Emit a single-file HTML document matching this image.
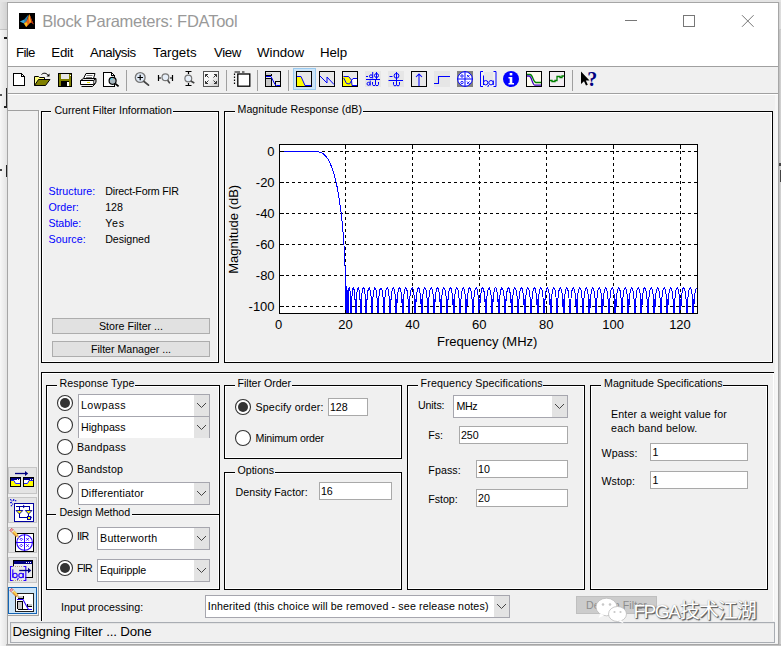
<!DOCTYPE html>
<html><head><meta charset="utf-8"><title>Block Parameters: FDATool</title>
<style>
html,body{margin:0;padding:0;}
body{width:781px;height:646px;position:relative;overflow:hidden;background:#f7f7f7;font-family:'Liberation Sans', sans-serif;}
#root div{position:absolute;box-sizing:content-box;}
#root span{position:absolute;white-space:pre;}
#root{position:absolute;left:0;top:0;width:781px;height:646px;overflow:hidden;}
</style></head><body><div id="root">
<div style="left:0px;top:0px;width:781px;height:29px;background:#e4e4e4;"></div>
<div style="left:0px;top:29px;width:781px;height:617px;background:#f7f7f7;"></div>
<div style="left:0px;top:29px;width:8px;height:1px;background:#c8c8c8;"></div>
<div style="left:779px;top:29px;width:2px;height:1px;background:#c8c8c8;"></div>
<div style="left:0px;top:2px;width:7px;height:644px;background:linear-gradient(90deg,rgba(0,0,0,0) 0%,rgba(0,0,0,0.08) 100%);"></div>
<div style="left:779px;top:2px;width:2px;height:27px;background:linear-gradient(90deg,#d0d0d0,#e2e2e2);"></div>
<div style="left:779px;top:30px;width:2px;height:616px;background:linear-gradient(90deg,#bcbcbc,#d6d6d6);"></div>
<div style="left:779px;top:163px;width:2px;height:3px;background:#444;"></div>
<div style="left:780px;top:170px;width:1px;height:12px;background:#444;"></div>
<div style="left:6px;top:644px;width:775px;height:2px;background:linear-gradient(180deg,#b0b0b0,#c8c8c8);"></div>
<div style="left:4px;top:37px;width:4px;height:2px;background:#1a1a1a;"></div>
<div style="left:7px;top:33px;width:1px;height:3px;background:#777;"></div>
<div style="left:6px;top:88px;width:1.5px;height:18px;background:#222;"></div>
<div style="left:4px;top:106px;width:3px;height:1.5px;background:#222;"></div>
<div style="left:0px;top:94px;width:2px;height:1.5px;background:#555;"></div>
<div style="left:6px;top:164.5px;width:1.5px;height:12px;background:#222;"></div>
<div style="left:0px;top:169px;width:2px;height:1.5px;background:#444;"></div>
<div style="left:7px;top:2px;width:770px;height:641px;border:1px solid #a6a6a6;background:#f0f0f0;"></div>
<div style="left:8px;top:3px;width:770px;height:64px;background:#fff;"></div>
<div style="left:8px;top:66px;width:770px;height:1px;background:#a0a0a0;"></div>
<div style="left:8px;top:93px;width:770px;height:1px;background:#a0a0a0;"></div>
<div style="left:8px;top:94px;width:770px;height:1px;background:#fff;"></div>
<div style="left:775px;top:95px;width:3px;height:548px;background:#f6f6f6;"></div>
<svg style="position:absolute;left:19px;top:13px" width="16" height="16" viewBox="0 0 16 16">
<rect width="16" height="16" fill="#000"/>
<path d="M0.8 8.6 L5.2 6.6 L7.2 8.2 L5 10.6 Z" fill="#3fa9d8"/>
<path d="M5.2 6.6 L9.6 1.6 L7.6 8.6 L5.6 10 Z" fill="#2c7fae"/>
<path d="M5 10.6 L7.6 8 L10.4 1.2 C11.6 3.5 12.8 7.5 14.8 11.4 L12.4 9.4 L10.6 10.6 C9.4 11.8 8.4 13.6 7.2 14 Z" fill="#e8641b"/>
<path d="M9.6 3 L10.4 1.2 C11.2 3 11.6 5.5 12 8.6 L10.6 10.2 Z" fill="#f9b417"/>
<path d="M5 10.6 L7.4 9.2 L8.6 11 L7.2 14 Z" fill="#f7c51d"/>
<path d="M10.4 1.2 C11.6 3.5 12.8 7.5 14.8 11.4 L12.4 9.4 Z" fill="#b5310f"/>
</svg>
<span style="left:42.3px;top:13.33px;font-size:16.5px;line-height:16.5px;color:#999;letter-spacing:-0.253px;font-family:'Liberation Sans', sans-serif;">Block Parameters: FDATool</span>
<svg style="position:absolute;left:620px;top:10px" width="140" height="22" viewBox="0 0 140 22">
<path d="M5 10.5H17" stroke="#777" stroke-width="1" fill="none"/>
<rect x="63.5" y="5.5" width="11" height="11" stroke="#777" stroke-width="1" fill="none"/>
<path d="M122 5.2L133.6 16.8M133.6 5.2L122 16.8" stroke="#777" stroke-width="1" fill="none"/>
</svg>
<span style="left:16.0px;top:46.04px;font-size:13.3px;line-height:13.3px;color:#000;letter-spacing:-0.700px;font-family:'Liberation Sans', sans-serif;">File</span>
<span style="left:51.3px;top:46.04px;font-size:13.3px;line-height:13.3px;color:#000;letter-spacing:-0.230px;font-family:'Liberation Sans', sans-serif;">Edit</span>
<span style="left:90.0px;top:46.04px;font-size:13.3px;line-height:13.3px;color:#000;letter-spacing:-0.489px;font-family:'Liberation Sans', sans-serif;">Analysis</span>
<span style="left:153.0px;top:46.04px;font-size:13.3px;line-height:13.3px;color:#000;letter-spacing:-0.001px;font-family:'Liberation Sans', sans-serif;">Targets</span>
<span style="left:214.0px;top:46.04px;font-size:13.3px;line-height:13.3px;color:#000;letter-spacing:-0.398px;font-family:'Liberation Sans', sans-serif;">View</span>
<span style="left:257.0px;top:46.04px;font-size:13.3px;line-height:13.3px;color:#000;letter-spacing:-0.049px;font-family:'Liberation Sans', sans-serif;">Window</span>
<span style="left:320.0px;top:46.04px;font-size:13.3px;line-height:13.3px;color:#000;letter-spacing:-0.090px;font-family:'Liberation Sans', sans-serif;">Help</span>
<svg style="position:absolute;left:0;top:66px" width="781" height="28" viewBox="0 66 781 28">
<g shape-rendering="crispEdges">
<!-- separators -->
<rect x="126" y="70" width="1" height="21" fill="#a0a0a0"/>
<rect x="226" y="70" width="1" height="21" fill="#a0a0a0"/>
<rect x="257" y="70" width="1" height="21" fill="#a0a0a0"/>
<rect x="288" y="70" width="1" height="21" fill="#a0a0a0"/>
<rect x="572" y="70" width="1" height="21" fill="#a0a0a0"/>
<!-- new -->
<path d="M13.5 73.5H21.5L24.500 76.500V85.500H13.500Z" fill="#fff" stroke="#000"/>
<path d="M21.500 73.500V76.500H24.500" fill="none" stroke="#000"/>
<!-- save -->
<rect x="58.500" y="73.500" width="13" height="13" fill="#808000" stroke="#000"/>
<rect x="61" y="74" width="8" height="5" fill="#e8e8e8"/>
<rect x="61" y="81" width="8" height="5" fill="#000"/>
<rect x="67" y="82" width="2" height="4" fill="#fff"/>
<rect x="70" y="75" width="1" height="1" fill="#fff"/>
<!-- full view -->
<rect x="203.500" y="71.500" width="15" height="15" fill="url(#gfv)" stroke="#555"/>
<!-- filter specs -->
<rect x="265.500" y="71.500" width="15" height="15" fill="#e6e6e6" stroke="#000"/>
<rect x="266" y="73" width="5" height="3" fill="#c8c8c8"/>
<rect x="266" y="78" width="5" height="8" fill="#c8c8c8"/>
<path d="M266 75.500H271.500V73.500M266 78.500H271.500V86M275.500 86V81.500H280" fill="none" stroke="#000"/>
<!-- mag selected -->
<rect x="293.500" y="68.500" width="22" height="21" fill="#cce4f7" stroke="#99c9ef"/>
<rect x="296.500" y="71.500" width="15" height="15" fill="#e8e8e8" stroke="#000"/>
<path d="M297 76.500H301L305 86H297Z" fill="#ffff00"/>
<!-- phase -->
<rect x="319.500" y="71.500" width="15" height="15" fill="#e8e8e8" stroke="#000"/>
<!-- mag&phase -->
<rect x="342.500" y="71.500" width="15" height="15" fill="#e8e8e8" stroke="#000"/>
<path d="M343 76H348.800L351.500 80V86H343Z" fill="#ffff00"/><rect x="352" y="79" width="5" height="6" fill="#fff"/>
<!-- group delay bg -->
<rect x="365" y="71" width="16" height="16" fill="#e6e6e6"/>
<rect x="388" y="71" width="16" height="16" fill="#e6e6e6"/>
<!-- impulse -->
<rect x="411.500" y="71.500" width="15" height="15" fill="#e8e8e8" stroke="#000"/>
<!-- step bg -->
<rect x="434" y="71" width="16" height="16" fill="#e6e6e6"/>
<!-- pz bg -->
<rect x="457" y="71" width="16" height="16" fill="#808080"/>
<!-- coeff bg -->
<rect x="484" y="72" width="9" height="8" fill="#e6e6e6"/>
<!-- mag est -->
<rect x="526.500" y="71.500" width="15" height="15" fill="#fffdf0" stroke="#000"/>
<rect x="549.500" y="71.500" width="15" height="15" fill="#f3eef3" stroke="#000"/>
</g>
<defs><linearGradient id="gfv" x1="0" y1="0" x2="1" y2="1"><stop offset="0" stop-color="#fff"/><stop offset="0.5" stop-color="#f4f4f4"/><stop offset="1" stop-color="#c4c4c4"/></linearGradient></defs>
<!-- open -->
<path d="M34.500 85.500V76.500H38.500L39.500 77.500H44.500V79.500" fill="#ffff80" stroke="#000"/>
<path d="M34.500 85.500L38.500 79.500H50L45.500 85.500Z" fill="#808000" stroke="#000"/>
<path d="M41.500 74.500C43.500 72.500 46.500 72.800 48.300 75.500" fill="none" stroke="#000"/>
<path d="M49.500 73.500V76.500H46.500Z" fill="#000"/>
<!-- print -->
<path d="M83.500 78.500L86 73.500H95L93.500 78.500" fill="#fff" stroke="#000"/>
<path d="M86.500 75.500H92.500M86 77.500H92" stroke="#777" fill="none"/>
<path d="M80.500 80.500L83.500 78.500H96L93.500 80.500Z" fill="#ddd" stroke="#000"/>
<path d="M80.500 80.500H93.500V84.500H80.500Z" fill="#fff" stroke="#000"/>
<path d="M93.500 80.500L96 78.500V82.500L93.500 84.500" fill="#bbb" stroke="#000"/>
<path d="M81.500 86.500H92.500L95.500 83.500" fill="none" stroke="#000"/>
<rect x="87" y="82" width="3" height="1" fill="#e8e000"/>
<!-- preview -->
<path d="M103.500 72.500H111.500L114.500 75.500V86.500H103.500Z" fill="#fff" stroke="#000" shape-rendering="crispEdges"/>
<path d="M111.500 72.500V75.500H114.500" fill="none" stroke="#000" shape-rendering="crispEdges"/>
<circle cx="112.600" cy="80.800" r="3.500" fill="#a8b8c0" stroke="#000" stroke-width="1.200"/>
<path d="M110.800 79.500L112 78.300" stroke="#40e0ff" stroke-width="1.200"/>
<path d="M115.300 83.600L118.600 86.400" stroke="#000" stroke-width="1.800"/>
<!-- zoom in -->
<circle cx="140.200" cy="77.500" r="4.900" fill="#dfe9f5" stroke="#777" stroke-width="1.300"/>
<path d="M137.500 77.500H143M140.200 74.800V80.300" stroke="#000" stroke-width="1.200"/>
<path d="M144 81.500L148.500 85.200" stroke="#444" stroke-width="1.700" stroke-linecap="round"/>
<!-- zoom x -->
<path d="M158.500 75V81M172.500 75V81M158.500 78H161M170 78H172.500" stroke="#000" stroke-width="1.200"/>
<circle cx="165.400" cy="77.300" r="3.400" fill="#e6eef8" stroke="#777" stroke-width="1.200"/>
<path d="M167.700 80.200L169.800 83.400" stroke="#444" stroke-width="1.600"/>
<!-- zoom y -->
<path d="M185.500 71.500H191.500M185.500 85.500H191.500M188.500 71.500V74M188.500 83V85.500" stroke="#000" stroke-width="1.200"/>
<circle cx="188.300" cy="78.500" r="3.400" fill="#e6eef8" stroke="#777" stroke-width="1.200"/>
<path d="M190.800 81L194.300 83" stroke="#444" stroke-width="1.600"/>
<!-- full view arrows -->
<g stroke="#333" stroke-width="1" fill="none">
<path d="M205.500 77V74.500H208M205.500 74.500L208.500 77.500" />
<path d="M216.500 77V74.500H214M216.500 74.500L213.500 77.500"/>
<path d="M205.500 81V83.500H208M205.500 83.500L208.500 80.500"/>
<path d="M216.500 81V83.500H214M216.500 83.500L213.500 80.500"/>
</g>
<!-- copy -->
<path d="M234.500 84V73" fill="none" stroke="#000" stroke-width="1.200" stroke-dasharray="1.500 1.500"/><path d="M234.500 72H240M242 72H244.500" fill="none" stroke="#000" stroke-width="1.200"/>
<rect x="237.800" y="74" width="12" height="12.200" fill="#fff" stroke="#000" stroke-width="1.300"/>
<!-- filter specs curve -->
<path d="M266 76.500H271L275 84.500L276.500 85.500H280" fill="none" stroke="#0000ff" stroke-width="1"/>
<!-- mag curve -->
<path d="M297 76.500H301L305 85.500H311" fill="none" stroke="#0000ff" stroke-width="1"/>
<!-- phase -->
<path d="M320 76L327 83V77L334 84.500" fill="none" stroke="#0000ff" stroke-width="1"/>
<!-- mag&phase -->
<path d="M343.500 76.500H348.500L351.500 80L352 85.500H357" fill="none" stroke="#0000ff" stroke-width="1"/>
<path d="M343.700 78L346.500 83.500L349.500 84L351.500 80.500L353 78.500H357" fill="none" stroke="#0000ff" stroke-width="1"/>
<!-- group delay  -d phi / d w -->
<g fill="none" stroke="#0000ff" stroke-width="1">
<path d="M366 76.500H368"/>
<path d="M366 79.500H380"/>
<circle cx="371" cy="76.300" r="1.500"/><path d="M372.700 72V78.500"/>
<circle cx="376.500" cy="75.500" r="2"/><path d="M376.500 72V79"/>
<circle cx="368.500" cy="83.800" r="1.500"/><path d="M370.200 80.500V85.500"/>
<path d="M372.500 82V84.500C372.500 86 375.500 86 375.500 84.500V79.500M375.500 84.500C375.500 86 378.500 86 378.500 84.500V82"/>
</g>
<!-- phase delay -phi/w -->
<g fill="none" stroke="#0000ff" stroke-width="1">
<path d="M389.500 76.500H392.500"/>
<path d="M388.500 80.500H403"/>
<circle cx="396.500" cy="75.800" r="2.400"/><path d="M396.500 72V85"/>
<path d="M393.500 82V84.500C393.500 86.300 396.500 86.300 396.500 84.500M396.500 84.500C396.500 86.300 399.500 86.300 399.500 84.500V82"/>
</g>
<!-- impulse -->
<path d="M419 86V74M416 77L419 74L422 77" fill="none" stroke="#0000ff" stroke-width="1.050"/>
<!-- step -->
<path d="M434 83.500H438.500V76.500H450" fill="none" stroke="#0000ff" stroke-width="1.050"/>
<!-- pz -->
<circle cx="465" cy="79" r="7.300" fill="#fff" stroke="#0000ff" stroke-width="1"/>
<path d="M457 79H473M465 71V87" stroke="#0000ff" stroke-width="1"/>
<g stroke="#0000ff" stroke-width="0.900" fill="none">
<circle cx="462" cy="76" r="1.200"/><circle cx="462" cy="82.500" r="1.200"/>
<path d="M467 75L469.500 77.500M469.500 75L467 77.500M467 81.500L469.500 84M469.500 81.500L467 84"/>
</g>
<!-- coeffs [b,a] -->
<g fill="none" stroke="#0000ff" stroke-width="1">
<path d="M483 71.500H480.500V86.500H483"/>
<path d="M493.500 71.500H496V86.500H493.500"/>
<path d="M483.500 75.500V85"/><circle cx="485.700" cy="82.700" r="2.200"/>
<path d="M488.600 85L487.800 87"/>
<circle cx="491" cy="82.700" r="2.200"/><path d="M493.300 80.500V85"/>
</g>
<!-- info -->
<circle cx="511" cy="79" r="8" fill="#0000ff"/>
<rect x="509.700" y="73" width="2.600" height="2.400" fill="#fff"/>
<path d="M508.500 77H512.300V83H514V84.500H508.500V83H509.700V78.500H508.500Z" fill="#fff"/>
<!-- mag est -->
<path d="M527 74.500H530C533 74.500 533 82.500 536 82.500H541" fill="none" stroke="#008000" stroke-width="1.300"/>
<path d="M527 76H529C532 76 532 85.200 535 85.200H541" fill="none" stroke="#4000c0" stroke-width="1.300"/>
<!-- noise -->
<path d="M550 80.500H552V81.500H555V80.500H557V76.500H560V77.500H562V76H564" fill="none" stroke="#008000" stroke-width="1.300"/>
<!-- whats this -->
<path d="M581 71.500V84L584 81.200L586 85.500L587.800 84.700L585.800 80.500H589.500Z" fill="#000"/>
<text x="587.300" y="86" font-family="Liberation Serif, serif" font-weight="bold" font-size="20" fill="#000080">?</text>
</svg>

<div style="left:8px;top:110px;width:31px;height:1px;background:#a0a0a0;"></div>
<div style="left:38px;top:110px;width:1px;height:506px;background:#a0a0a0;"></div>
<div style="left:8px;top:615px;width:31px;height:1px;background:#a0a0a0;"></div>
<div style="left:39px;top:111px;width:1px;height:506px;background:#fff;"></div>
<svg style="position:absolute;left:0;top:460px" width="44" height="162" viewBox="0 460 44 162">
<defs>
<g id="pencil">
<path d="M10 530.400L11.900 528.600L18.200 535L16.300 536.900Z" fill="#f6b040" stroke="#a05020" stroke-width="0.600"/>
<path d="M13.300 530.100L17.700 534.500L16.900 535.300L12.500 530.900Z" fill="#ffe060"/>
<path d="M9.800 530.300L11.800 528.400L13.200 529.800L11.200 531.700Z" fill="#f49ab0" stroke="#c03050" stroke-width="0.500"/>
<path d="M11.300 531.800L13.300 529.900L14.200 530.800L12.200 532.700Z" fill="#e4e4e4"/>
<path d="M16.300 536.900L18.200 535L19.300 538Z" fill="#f0c8a0"/>
<path d="M18.300 537L19.300 538L18.900 536.600Z" fill="#222"/>
</g>
</defs>
<g shape-rendering="crispEdges">
<!-- buttons -->
<rect x="8.500" y="467.500" width="28" height="26" fill="#e4e4e4" stroke="#c6c6c6"/>
<rect x="8.500" y="497.500" width="28" height="25" fill="#e4e4e4" stroke="#c6c6c6"/>
<rect x="8.500" y="527.500" width="28" height="25" fill="#e4e4e4" stroke="#c6c6c6"/>
<rect x="8.500" y="557.500" width="28" height="25" fill="#e4e4e4" stroke="#c6c6c6"/>
<rect x="8.500" y="587.500" width="28" height="26" fill="#cce4f7" stroke="#1464b4"/>
<!-- icon1 -->
<rect x="10.500" y="477.500" width="10" height="9" fill="#fff" stroke="#000"/>
<rect x="11" y="478" width="9" height="2" fill="#000080"/>
<rect x="17" y="479" width="1" height="1" fill="#fff"/><rect x="19" y="479" width="1" height="1" fill="#fff"/>
<path d="M11 481H14L15.500 484H20V486H11Z" fill="#ffff00"/>
<rect x="23.500" y="477.500" width="10" height="9" fill="#fff" stroke="#000"/>
<rect x="24" y="478" width="9" height="2" fill="#000080"/>
<rect x="30" y="479" width="1" height="1" fill="#fff"/><rect x="32" y="479" width="1" height="1" fill="#fff"/>
<path d="M24 484H27.500L29 481H33V486H24Z" fill="#ffff00"/>
<!-- icon2 -->
<rect x="14.500" y="503.500" width="19" height="18" fill="#fff" stroke="#0000a0"/>
<path d="M16 506.500H29V510M19.500 506.500V517.500H27M28.500 513.500V516" fill="none" stroke="#0000a0"/>
<rect x="27" y="516" width="3" height="3" fill="#ffff00" stroke="#0000a0"/>
<!-- icon3 -->
<rect x="15.500" y="533.500" width="18" height="18" fill="#fff" stroke="#000"/>
<!-- icon4 -->
<rect x="13.500" y="560.500" width="19" height="17" fill="#ececec" stroke="#000"/>
<rect x="32" y="561" width="1" height="17" fill="#000"/><rect x="14" y="577" width="19" height="1" fill="#000"/>
<rect x="14" y="561" width="18" height="3" fill="#000080"/>
<rect x="26" y="562" width="1" height="1" fill="#fff"/><rect x="28" y="562" width="1" height="1" fill="#fff"/><rect x="30" y="562" width="1" height="1" fill="#fff"/>
<rect x="11" y="566" width="14" height="15" fill="#e8e8e8"/>
<path d="M13 566.500H23M13 580.500H23" stroke="#b0a080" stroke-dasharray="1 1" fill="none"/>
<!-- icon5 -->
<rect x="15.500" y="593.500" width="18" height="18" fill="#fff" stroke="#222"/>
<rect x="18" y="596" width="5" height="2" fill="#c8c8c8"/>
<rect x="18" y="602" width="4" height="7" fill="#c8c8c8"/>
<rect x="28" y="604" width="4" height="2" fill="#c8c8c8"/>
<path d="M17.500 598.500H23.500V596M17.500 609V601.500H22.500V609.500M17.500 609.500H28M27.500 604V606.500H32" fill="none" stroke="#000"/>
</g>
<!-- icon1 details -->
<path d="M15 473.500H26" fill="none" stroke="#000080" stroke-width="1.300"/>
<path d="M25 471L28.200 473.500L25 476Z" fill="#000080"/>
<path d="M11 480.500H14L15.500 483.500H20" fill="none" stroke="#2020ff" stroke-width="1"/>
<path d="M24 483.500H27.500L29 480.500H33" fill="none" stroke="#2020ff" stroke-width="1"/>
<!-- icon2 details -->
<path d="M16 510.500H22.800L19.400 514Z" fill="#ffff00" stroke="#0000a0" stroke-width="0.900"/>
<path d="M25.300 510.500H32L28.600 514Z" fill="#ffff00" stroke="#0000a0" stroke-width="0.900"/>
<path d="M23 505L24.800 506.500L23 508M30 516L31.800 517.500L30 519" fill="none" stroke="#0000a0" stroke-width="0.900"/>
<g fill="#2020e0">
<rect x="10" y="499" width="1.300" height="1.300"/><rect x="11.300" y="500.200" width="1.200" height="1.200"/><rect x="13" y="499" width="1.300" height="2"/><rect x="15" y="500" width="1.300" height="1.300"/>
<rect x="10" y="502" width="2" height="1.200"/><rect x="12" y="503.500" width="1.200" height="1.200"/><rect x="10.800" y="505" width="1.300" height="1.300"/>
</g>
<!-- icon3 details -->
<circle cx="24.600" cy="542.500" r="7.800" fill="none" stroke="#2a00ff" stroke-width="1.100"/>
<path d="M16 542.500H33M24.500 534V551" stroke="#2a00ff" stroke-width="1.100" shape-rendering="crispEdges"/>
<g stroke="#2a00ff" stroke-width="0.900" fill="none">
<path d="M21.300 538L22.600 539.300L21.300 540.600L20 539.300ZM21.300 544.200L22.600 545.500L21.300 546.800L20 545.500Z"/>
<path d="M26.300 538.100L28.800 540.600M28.800 538.100L26.300 540.600M26.300 544.300L28.800 546.800M28.800 544.300L26.300 546.800"/>
</g>
<use href="#pencil"/>
<!-- icon4 details -->
<g fill="none" stroke="#2a00ff" stroke-width="1.100">
<path d="M12.800 566.500H10.500V580.500H12.800"/>
<path d="M23.500 566.500H25.800V580.500H23.500"/>
<path d="M12.800 569.300V577.800"/><circle cx="15" cy="575.400" r="2.200"/>
<path d="M18.300 578L17.400 580"/>
<circle cx="21" cy="575.400" r="2.200"/><path d="M23.300 573V578"/>
</g>
<path d="M19.200 570.500H28.500" fill="none" stroke="#000080" stroke-width="1.300"/>
<path d="M28 567.800L31.300 570.500L28 573.200Z" fill="#000080"/>
<!-- icon5 details -->
<path d="M17 599.500H23L26.500 606L28.500 609.500H32" fill="none" stroke="#2a00ff" stroke-width="1.100"/>
<use href="#pencil" transform="translate(0,60)"/>
</svg>

<div style="left:41px;top:111px;width:176px;height:250px;border:1px solid #000;box-shadow:inset 1px 1px 0 #fff, inset -1px -1px 0 #fff;"></div>
<div style="left:51.4px;top:109px;width:121.2px;height:5px;background:#f0f0f0;"></div>
<span style="left:54.4px;top:104.87px;font-size:10.67px;line-height:10.67px;color:#000;letter-spacing:-0.037px;font-family:'Liberation Sans', sans-serif;">Current Filter Information</span>
<span style="left:48.5px;top:185.97px;font-size:10.67px;line-height:10.67px;color:#0000ff;letter-spacing:0.060px;font-family:'Liberation Sans', sans-serif;">Structure:</span>
<span style="left:105.2px;top:185.97px;font-size:10.67px;line-height:10.67px;color:#000;letter-spacing:-0.178px;font-family:'Liberation Sans', sans-serif;">Direct-Form FIR</span>
<span style="left:48.5px;top:201.97px;font-size:10.67px;line-height:10.67px;color:#0000ff;letter-spacing:0.016px;font-family:'Liberation Sans', sans-serif;">Order:</span>
<span style="left:105.2px;top:201.97px;font-size:10.67px;line-height:10.67px;color:#000;letter-spacing:0.006px;font-family:'Liberation Sans', sans-serif;">128</span>
<span style="left:48.5px;top:217.97px;font-size:10.67px;line-height:10.67px;color:#0000ff;letter-spacing:-0.098px;font-family:'Liberation Sans', sans-serif;">Stable:</span>
<span style="left:105.2px;top:217.97px;font-size:10.67px;line-height:10.67px;color:#000;letter-spacing:0.703px;font-family:'Liberation Sans', sans-serif;">Yes</span>
<span style="left:48.5px;top:233.97px;font-size:10.67px;line-height:10.67px;color:#0000ff;letter-spacing:0.067px;font-family:'Liberation Sans', sans-serif;">Source:</span>
<span style="left:105.2px;top:233.97px;font-size:10.67px;line-height:10.67px;color:#000;letter-spacing:-0.054px;font-family:'Liberation Sans', sans-serif;">Designed</span>
<div style="left:52px;top:318px;width:156px;height:14px;border:1px solid #adadad;background:#e1e1e1;"></div>
<span style="left:99.0px;top:320.97px;font-size:10.67px;line-height:10.67px;color:#000;letter-spacing:0.003px;font-family:'Liberation Sans', sans-serif;">Store Filter ...</span>
<div style="left:52px;top:341px;width:156px;height:14px;border:1px solid #adadad;background:#e1e1e1;"></div>
<span style="left:91.0px;top:343.97px;font-size:10.67px;line-height:10.67px;color:#000;letter-spacing:-0.030px;font-family:'Liberation Sans', sans-serif;">Filter Manager ...</span>
<div style="left:224px;top:111px;width:547px;height:250px;border:1px solid #000;box-shadow:inset 1px 1px 0 #fff, inset -1px -1px 0 #fff;"></div>
<div style="left:234.5px;top:109px;width:128.2px;height:5px;background:#f0f0f0;"></div>
<span style="left:237.5px;top:103.97px;font-size:10.67px;line-height:10.67px;color:#000;letter-spacing:0.030px;font-family:'Liberation Sans', sans-serif;">Magnitude Response (dB)</span>
<svg style="position:absolute;left:0;top:0" width="781" height="646" viewBox="0 0 781 646" shape-rendering="crispEdges">
<rect x="279.5" y="144.5" width="418.0" height="169.0" fill="#fff" stroke="none"/>
<line x1="345.5" y1="144.5" x2="345.5" y2="313.5" stroke="#000" stroke-width="1" stroke-dasharray="3 3"/>
<line x1="412.5" y1="144.5" x2="412.5" y2="313.5" stroke="#000" stroke-width="1" stroke-dasharray="3 3"/>
<line x1="479.5" y1="144.5" x2="479.5" y2="313.5" stroke="#000" stroke-width="1" stroke-dasharray="3 3"/>
<line x1="546.5" y1="144.5" x2="546.5" y2="313.5" stroke="#000" stroke-width="1" stroke-dasharray="3 3"/>
<line x1="613.5" y1="144.5" x2="613.5" y2="313.5" stroke="#000" stroke-width="1" stroke-dasharray="3 3"/>
<line x1="680.5" y1="144.5" x2="680.5" y2="313.5" stroke="#000" stroke-width="1" stroke-dasharray="3 3"/>
<line x1="279.5" y1="151.5" x2="697.5" y2="151.5" stroke="#000" stroke-width="1" stroke-dasharray="3 3"/>
<line x1="279.5" y1="182.5" x2="697.5" y2="182.5" stroke="#000" stroke-width="1" stroke-dasharray="3 3"/>
<line x1="279.5" y1="213.5" x2="697.5" y2="213.5" stroke="#000" stroke-width="1" stroke-dasharray="3 3"/>
<line x1="279.5" y1="244.5" x2="697.5" y2="244.5" stroke="#000" stroke-width="1" stroke-dasharray="3 3"/>
<line x1="279.5" y1="275.5" x2="697.5" y2="275.5" stroke="#000" stroke-width="1" stroke-dasharray="3 3"/>
<line x1="279.5" y1="306.5" x2="697.5" y2="306.5" stroke="#000" stroke-width="1" stroke-dasharray="3 3"/>
<clipPath id="cp"><rect x="279.5" y="144.5" width="418.0" height="169.0"/></clipPath>
<polyline clip-path="url(#cp)" points="278.7,151.5 278.8,151.5 278.9,151.5 279.0,151.5 279.1,151.5 279.2,151.5 279.3,151.5 279.4,151.5 279.5,151.5 279.6,151.5 279.7,151.5 279.8,151.5 279.9,151.5 280.0,151.5 280.1,151.5 280.2,151.5 280.3,151.5 280.4,151.5 280.5,151.5 280.6,151.5 280.7,151.5 280.8,151.5 280.9,151.5 281.0,151.5 281.1,151.5 281.3,151.5 281.4,151.5 281.5,151.5 281.6,151.5 281.7,151.5 281.8,151.5 281.9,151.5 282.0,151.5 282.1,151.5 282.2,151.5 282.3,151.5 282.4,151.5 282.5,151.5 282.6,151.5 282.7,151.5 282.8,151.5 282.9,151.5 283.0,151.5 283.1,151.5 283.2,151.5 283.3,151.5 283.4,151.5 283.5,151.5 283.6,151.5 283.7,151.5 283.8,151.5 283.9,151.5 284.0,151.5 284.1,151.5 284.2,151.5 284.3,151.5 284.4,151.5 284.5,151.5 284.6,151.5 284.7,151.5 284.8,151.5 284.9,151.5 285.0,151.5 285.1,151.5 285.2,151.5 285.3,151.5 285.4,151.5 285.5,151.5 285.6,151.5 285.7,151.5 285.8,151.5 285.9,151.5 286.0,151.5 286.1,151.5 286.3,151.5 286.4,151.5 286.5,151.5 286.6,151.5 286.7,151.5 286.8,151.5 286.9,151.5 287.0,151.5 287.1,151.5 287.2,151.5 287.3,151.5 287.4,151.5 287.5,151.5 287.6,151.5 287.7,151.5 287.8,151.5 287.9,151.5 288.0,151.5 288.1,151.5 288.2,151.5 288.3,151.5 288.4,151.5 288.5,151.5 288.6,151.5 288.7,151.5 288.8,151.5 288.9,151.5 289.0,151.5 289.1,151.5 289.2,151.5 289.3,151.5 289.4,151.5 289.5,151.5 289.6,151.5 289.7,151.5 289.8,151.5 289.9,151.5 290.0,151.5 290.1,151.5 290.2,151.5 290.3,151.5 290.4,151.5 290.5,151.5 290.6,151.5 290.7,151.5 290.8,151.5 290.9,151.5 291.0,151.5 291.2,151.5 291.3,151.5 291.4,151.5 291.5,151.5 291.6,151.5 291.7,151.5 291.8,151.5 291.9,151.5 292.0,151.5 292.1,151.5 292.2,151.5 292.3,151.5 292.4,151.5 292.5,151.5 292.6,151.5 292.7,151.5 292.8,151.5 292.9,151.5 293.0,151.5 293.1,151.5 293.2,151.5 293.3,151.5 293.4,151.5 293.5,151.5 293.6,151.5 293.7,151.5 293.8,151.5 293.9,151.5 294.0,151.5 294.1,151.5 294.2,151.5 294.3,151.5 294.4,151.5 294.5,151.5 294.6,151.5 294.7,151.5 294.8,151.5 294.9,151.5 295.0,151.5 295.1,151.5 295.2,151.5 295.3,151.5 295.4,151.5 295.5,151.5 295.6,151.5 295.7,151.5 295.8,151.5 295.9,151.5 296.0,151.5 296.2,151.5 296.3,151.5 296.4,151.5 296.5,151.5 296.6,151.5 296.7,151.5 296.8,151.5 296.9,151.5 297.0,151.5 297.1,151.5 297.2,151.5 297.3,151.5 297.4,151.5 297.5,151.5 297.6,151.5 297.7,151.5 297.8,151.5 297.9,151.5 298.0,151.5 298.1,151.5 298.2,151.5 298.3,151.5 298.4,151.5 298.5,151.5 298.6,151.5 298.7,151.5 298.8,151.5 298.9,151.5 299.0,151.5 299.1,151.5 299.2,151.5 299.3,151.5 299.4,151.5 299.5,151.5 299.6,151.5 299.7,151.5 299.8,151.5 299.9,151.5 300.0,151.5 300.1,151.5 300.2,151.5 300.3,151.5 300.4,151.5 300.5,151.5 300.6,151.5 300.7,151.5 300.8,151.5 300.9,151.5 301.0,151.5 301.2,151.5 301.3,151.5 301.4,151.5 301.5,151.5 301.6,151.5 301.7,151.5 301.8,151.5 301.9,151.5 302.0,151.5 302.1,151.5 302.2,151.5 302.3,151.5 302.4,151.5 302.5,151.5 302.6,151.5 302.7,151.5 302.8,151.5 302.9,151.5 303.0,151.5 303.1,151.5 303.2,151.5 303.3,151.5 303.4,151.5 303.5,151.5 303.6,151.5 303.7,151.5 303.8,151.5 303.9,151.5 304.0,151.5 304.1,151.5 304.2,151.5 304.3,151.5 304.4,151.5 304.5,151.5 304.6,151.5 304.7,151.5 304.8,151.5 304.9,151.5 305.0,151.5 305.1,151.5 305.2,151.5 305.3,151.5 305.4,151.5 305.5,151.5 305.6,151.5 305.7,151.5 305.8,151.5 305.9,151.5 306.0,151.5 306.2,151.5 306.3,151.5 306.4,151.5 306.5,151.5 306.6,151.5 306.7,151.5 306.8,151.5 306.9,151.5 307.0,151.5 307.1,151.5 307.2,151.5 307.3,151.5 307.4,151.5 307.5,151.5 307.6,151.5 307.7,151.5 307.8,151.5 307.9,151.5 308.0,151.5 308.1,151.5 308.2,151.5 308.3,151.5 308.4,151.5 308.5,151.5 308.6,151.5 308.7,151.5 308.8,151.5 308.9,151.5 309.0,151.5 309.1,151.5 309.2,151.5 309.3,151.5 309.4,151.5 309.5,151.5 309.6,151.5 309.7,151.5 309.8,151.5 309.9,151.5 310.0,151.5 310.1,151.5 310.2,151.5 310.3,151.5 310.4,151.5 310.5,151.5 310.6,151.5 310.7,151.5 310.8,151.5 310.9,151.5 311.1,151.5 311.2,151.5 311.3,151.5 311.4,151.5 311.5,151.5 311.6,151.5 311.7,151.5 311.8,151.5 311.9,151.5 312.0,151.5 312.1,151.5 312.2,151.5 312.3,151.5 312.4,151.5 312.5,151.5 312.6,151.5 312.7,151.5 312.8,151.5 312.9,151.5 313.0,151.5 313.1,151.5 313.2,151.5 313.3,151.5 313.4,151.5 313.5,151.5 313.6,151.5 313.7,151.5 313.8,151.5 313.9,151.5 314.0,151.5 314.1,151.5 314.2,151.5 314.3,151.5 314.4,151.5 314.5,151.5 314.6,151.5 314.7,151.5 314.8,151.5 314.9,151.5 315.0,151.5 315.1,151.5 315.2,151.6 315.3,151.6 315.4,151.6 315.5,151.6 315.6,151.6 315.7,151.6 315.8,151.6 315.9,151.6 316.1,151.6 316.2,151.6 316.3,151.6 316.4,151.6 316.5,151.6 316.6,151.6 316.7,151.6 316.8,151.7 316.9,151.7 317.0,151.7 317.1,151.7 317.2,151.7 317.3,151.7 317.4,151.7 317.5,151.7 317.6,151.7 317.7,151.8 317.8,151.8 317.9,151.8 318.0,151.8 318.1,151.8 318.2,151.8 318.3,151.9 318.4,151.9 318.5,151.9 318.6,151.9 318.7,151.9 318.8,152.0 318.9,152.0 319.0,152.0 319.1,152.0 319.2,152.0 319.3,152.1 319.4,152.1 319.5,152.1 319.6,152.2 319.7,152.2 319.8,152.2 319.9,152.2 320.0,152.3 320.1,152.3 320.2,152.3 320.3,152.4 320.4,152.4 320.5,152.4 320.6,152.5 320.7,152.5 320.8,152.6 320.9,152.6 321.1,152.6 321.2,152.7 321.3,152.7 321.4,152.8 321.5,152.8 321.6,152.9 321.7,152.9 321.8,153.0 321.9,153.0 322.0,153.1 322.1,153.1 322.2,153.2 322.3,153.3 322.4,153.3 322.5,153.4 322.6,153.4 322.7,153.5 322.8,153.6 322.9,153.6 323.0,153.7 323.1,153.8 323.2,153.8 323.3,153.9 323.4,154.0 323.5,154.1 323.6,154.1 323.7,154.2 323.8,154.3 323.9,154.4 324.0,154.5 324.1,154.5 324.2,154.6 324.3,154.7 324.4,154.8 324.5,154.9 324.6,155.0 324.7,155.1 324.8,155.2 324.9,155.3 325.0,155.4 325.1,155.5 325.2,155.6 325.3,155.7 325.4,155.8 325.5,155.9 325.6,156.1 325.7,156.2 325.8,156.3 325.9,156.4 326.1,156.5 326.2,156.7 326.3,156.8 326.4,156.9 326.5,157.0 326.6,157.2 326.7,157.3 326.8,157.5 326.9,157.6 327.0,157.7 327.1,157.9 327.2,158.0 327.3,158.2 327.4,158.3 327.5,158.5 327.6,158.6 327.7,158.8 327.8,159.0 327.9,159.1 328.0,159.3 328.1,159.5 328.2,159.6 328.3,159.8 328.4,160.0 328.5,160.2 328.6,160.3 328.7,160.5 328.8,160.7 328.9,160.9 329.0,161.1 329.1,161.3 329.2,161.5 329.3,161.7 329.4,161.9 329.5,162.1 329.6,162.3 329.7,162.5 329.8,162.7 329.9,162.9 330.0,163.2 330.1,163.4 330.2,163.6 330.3,163.8 330.4,164.1 330.5,164.3 330.6,164.5 330.7,164.8 330.8,165.0 330.9,165.3 331.1,165.5 331.2,165.8 331.3,166.0 331.4,166.3 331.5,166.5 331.6,166.8 331.7,167.1 331.8,167.4 331.9,167.6 332.0,167.9 332.1,168.2 332.2,168.5 332.3,168.8 332.4,169.1 332.5,169.4 332.6,169.7 332.7,170.0 332.8,170.3 332.9,170.6 333.0,170.9 333.1,171.2 333.2,171.5 333.3,171.9 333.4,172.2 333.5,172.5 333.6,172.9 333.7,173.2 333.8,173.6 333.9,173.9 334.0,174.3 334.1,174.6 334.2,175.0 334.3,175.4 334.4,175.7 334.5,176.1 334.6,176.5 334.7,176.9 334.8,177.3 334.9,177.6 335.0,178.0 335.1,178.4 335.2,178.9 335.3,179.3 335.4,179.7 335.5,180.1 335.6,180.5 335.7,181.0 335.8,181.4 336.0,181.8 336.1,182.3 336.2,182.7 336.3,183.2 336.4,183.7 336.5,184.1 336.6,184.6 336.7,185.1 336.8,185.6 336.9,186.0 337.0,186.5 337.1,187.0 337.2,187.5 337.3,188.1 337.4,188.6 337.5,189.1 337.6,189.6 337.7,190.2 337.8,190.7 337.9,191.3 338.0,191.8 338.1,192.4 338.2,193.0 338.3,193.5 338.4,194.1 338.5,194.7 338.6,195.3 338.7,195.9 338.8,196.5 338.9,197.2 339.0,197.8 339.1,198.4 339.2,199.1 339.3,199.7 339.4,200.4 339.5,201.1 339.6,201.8 339.7,202.5 339.8,203.2 339.9,203.9 340.0,204.6 340.1,205.3 340.2,206.1 340.3,206.8 340.4,207.6 340.5,208.4 340.6,209.2 340.7,210.0 340.8,210.8 341.0,211.6 341.1,212.4 341.2,213.3 341.3,214.1 341.4,215.0 341.5,215.9 341.6,216.8 341.7,217.7 341.8,218.7 341.9,219.6 342.0,220.6 342.1,221.6 342.2,222.6 342.3,223.6 342.4,224.7 342.5,225.8 342.6,226.8 342.7,228.0 342.8,229.1 342.9,230.3 343.0,231.5 343.1,232.7 343.2,233.9 343.3,235.2 343.4,236.6 343.5,237.9 343.6,239.3 343.7,240.7 343.8,242.2 343.9,243.8 344.0,245.3 344.1,247.0 344.2,248.7 344.3,250.5 344.4,252.3 344.5,254.3 344.6,256.4 344.7,258.5 344.8,260.8 344.9,263.3 345.0,266.0 345.1,268.9 345.2,272.2 345.3,275.9 345.4,280.2 345.5,285.6 345.6,292.9 345.7,305.4 345.8,313.5 346.0,301.5 346.1,294.9 346.2,291.4 346.3,289.3 346.4,288.1 346.5,287.4 346.6,287.2 346.7,287.3 346.8,287.8 346.9,288.5 347.0,289.6 347.1,291.0 347.2,292.8 347.3,295.1 347.4,298.0 347.5,301.9 347.6,307.4 347.7,313.5 347.8,313.5 347.9,313.5 348.0,307.4 348.1,302.3 348.2,298.8 348.3,296.2 348.4,294.2 348.5,292.6 348.6,291.3 348.7,290.3 348.8,289.5 348.9,288.9 349.0,288.4 349.1,288.1 349.2,287.9 349.3,287.8 349.4,287.8 349.5,288.0 349.6,288.2 349.7,288.6 349.8,289.1 349.9,289.7 350.0,290.5 350.1,291.4 350.2,292.4 350.3,293.7 350.4,295.1 350.5,296.9 350.6,299.0 350.7,301.5 350.8,304.8 351.0,309.2 351.1,313.5 351.2,313.5 351.3,313.5 351.4,313.5 351.5,310.0 351.6,305.5 351.7,302.2 351.8,299.7 351.9,297.6 352.0,295.9 352.1,294.5 352.2,293.2 352.3,292.2 352.4,291.3 352.5,290.5 352.6,289.9 352.7,289.3 352.8,288.9 352.9,288.5 353.0,288.2 353.1,288.0 353.2,287.9 353.3,287.8 353.4,287.9 353.5,287.9 353.6,288.1 353.7,288.3 353.8,288.6 353.9,289.0 354.0,289.4 354.1,289.9 354.2,290.5 354.3,291.2 354.4,292.0 354.5,293.0 354.6,294.0 354.7,295.2 354.8,296.6 354.9,298.2 355.0,300.2 355.1,302.5 355.2,305.3 355.3,308.9 355.4,313.5 355.5,313.5 355.6,313.5 355.7,313.5 355.9,313.5 356.0,310.4 356.1,306.4 356.2,303.4 356.3,301.0 356.4,299.0 356.5,297.3 356.6,295.9 356.7,294.7 356.8,293.6 356.9,292.6 357.0,291.8 357.1,291.1 357.2,290.5 357.3,289.9 357.4,289.4 357.5,289.0 357.6,288.7 357.7,288.4 357.8,288.2 357.9,288.0 358.0,287.9 358.1,287.9 358.2,287.9 358.3,287.9 358.4,288.0 358.5,288.2 358.6,288.4 358.7,288.7 358.8,289.0 358.9,289.4 359.0,289.9 359.1,290.4 359.2,291.0 359.3,291.7 359.4,292.4 359.5,293.3 359.6,294.3 359.7,295.4 359.8,296.7 359.9,298.1 360.0,299.8 360.1,301.8 360.2,304.1 360.3,307.1 360.4,310.9 360.5,313.5 360.6,313.5 360.7,313.5 360.9,313.5 361.0,313.5 361.1,311.0 361.2,307.2 361.3,304.3 361.4,301.9 361.5,300.0 361.6,298.3 361.7,296.8 361.8,295.6 361.9,294.5 362.0,293.5 362.1,292.6 362.2,291.9 362.3,291.2 362.4,290.6 362.5,290.0 362.6,289.6 362.7,289.2 362.8,288.8 362.9,288.5 363.0,288.3 363.1,288.1 363.2,288.0 363.3,287.9 363.4,287.8 363.5,287.8 363.6,287.8 363.7,287.9 363.8,288.1 363.9,288.2 364.0,288.5 364.1,288.8 364.2,289.1 364.3,289.5 364.4,289.9 364.5,290.4 364.6,291.0 364.7,291.6 364.8,292.3 364.9,293.1 365.0,294.0 365.1,295.0 365.2,296.2 365.3,297.4 365.4,298.9 365.5,300.6 365.6,302.6 365.7,305.0 365.9,308.0 366.0,311.8 366.1,313.5 366.2,313.5 366.3,313.5 366.4,313.5 366.5,313.5 366.6,311.6 366.7,307.8 366.8,304.9 366.9,302.6 367.0,300.6 367.1,298.9 367.2,297.5 367.3,296.2 367.4,295.1 367.5,294.1 367.6,293.2 367.7,292.4 367.8,291.7 367.9,291.1 368.0,290.5 368.1,290.0 368.2,289.6 368.3,289.2 368.4,288.9 368.5,288.6 368.6,288.3 368.7,288.2 368.8,288.0 368.9,287.9 369.0,287.8 369.1,287.8 369.2,287.8 369.3,287.9 369.4,288.0 369.5,288.2 369.6,288.4 369.7,288.6 369.8,288.9 369.9,289.2 370.0,289.6 370.1,290.0 370.2,290.5 370.3,291.1 370.4,291.7 370.5,292.4 370.6,293.2 370.7,294.0 370.9,295.0 371.0,296.1 371.1,297.3 371.2,298.7 371.3,300.3 371.4,302.1 371.5,304.3 371.6,306.9 371.7,310.3 371.8,313.5 371.9,313.5 372.0,313.5 372.1,313.5 372.2,313.5 372.3,313.5 372.4,310.1 372.5,306.8 372.6,304.2 372.7,302.0 372.8,300.2 372.9,298.6 373.0,297.3 373.1,296.1 373.2,295.0 373.3,294.0 373.4,293.2 373.5,292.4 373.6,291.8 373.7,291.1 373.8,290.6 373.9,290.1 374.0,289.7 374.1,289.3 374.2,289.0 374.3,288.7 374.4,288.5 374.5,288.3 374.6,288.1 374.7,288.0 374.8,287.9 374.9,287.9 375.0,287.9 375.1,287.9 375.2,288.0 375.3,288.2 375.4,288.3 375.5,288.5 375.6,288.8 375.8,289.1 375.9,289.4 376.0,289.8 376.1,290.2 376.2,290.7 376.3,291.3 376.4,291.9 376.5,292.6 376.6,293.4 376.7,294.2 376.8,295.2 376.9,296.3 377.0,297.5 377.1,298.9 377.2,300.4 377.3,302.2 377.4,304.4 377.5,307.0 377.6,310.3 377.7,313.5 377.8,313.5 377.9,313.5 378.0,313.5 378.1,313.5 378.2,313.5 378.3,310.8 378.4,307.4 378.5,304.8 378.6,302.6 378.7,300.7 378.8,299.1 378.9,297.7 379.0,296.5 379.1,295.4 379.2,294.4 379.3,293.6 379.4,292.8 379.5,292.1 379.6,291.4 379.7,290.9 379.8,290.4 379.9,289.9 380.0,289.5 380.1,289.2 380.2,288.9 380.3,288.6 380.4,288.4 380.5,288.2 380.6,288.1 380.8,288.0 380.9,287.9 381.0,287.9 381.1,287.9 381.2,288.0 381.3,288.0 381.4,288.2 381.5,288.3 381.6,288.6 381.7,288.8 381.8,289.1 381.9,289.4 382.0,289.8 382.1,290.3 382.2,290.7 382.3,291.3 382.4,291.9 382.5,292.6 382.6,293.3 382.7,294.2 382.8,295.1 382.9,296.1 383.0,297.3 383.1,298.6 383.2,300.1 383.3,301.8 383.4,303.9 383.5,306.3 383.6,309.3 383.7,313.3 383.8,313.5 383.9,313.5 384.0,313.5 384.1,313.5 384.2,313.5 384.3,312.4 384.4,308.6 384.5,305.8 384.6,303.4 384.7,301.5 384.8,299.8 384.9,298.3 385.0,297.1 385.1,295.9 385.2,294.9 385.3,294.0 385.4,293.2 385.5,292.5 385.6,291.8 385.8,291.2 385.9,290.7 386.0,290.2 386.1,289.8 386.2,289.4 386.3,289.1 386.4,288.8 386.5,288.5 386.6,288.3 386.7,288.2 386.8,288.0 386.9,287.9 387.0,287.9 387.1,287.9 387.2,287.9 387.3,288.0 387.4,288.1 387.5,288.2 387.6,288.4 387.7,288.6 387.8,288.8 387.9,289.1 388.0,289.4 388.1,289.8 388.2,290.3 388.3,290.7 388.4,291.3 388.5,291.9 388.6,292.6 388.7,293.3 388.8,294.1 388.9,295.0 389.0,296.0 389.1,297.2 389.2,298.5 389.3,299.9 389.4,301.6 389.5,303.6 389.6,305.9 389.7,308.8 389.8,312.6 389.9,313.5 390.0,313.5 390.1,313.5 390.2,313.5 390.3,313.5 390.4,313.4 390.5,309.4 390.6,306.4 390.8,304.0 390.9,302.0 391.0,300.2 391.1,298.7 391.2,297.4 391.3,296.3 391.4,295.2 391.5,294.3 391.6,293.5 391.7,292.7 391.8,292.0 391.9,291.4 392.0,290.9 392.1,290.4 392.2,289.9 392.3,289.5 392.4,289.2 392.5,288.9 392.6,288.6 392.7,288.4 392.8,288.2 392.9,288.1 393.0,288.0 393.1,287.9 393.2,287.9 393.3,287.9 393.4,287.9 393.5,288.0 393.6,288.1 393.7,288.2 393.8,288.4 393.9,288.6 394.0,288.9 394.1,289.2 394.2,289.5 394.3,289.9 394.4,290.4 394.5,290.9 394.6,291.4 394.7,292.0 394.8,292.7 394.9,293.5 395.0,294.3 395.1,295.2 395.2,296.3 395.3,297.4 395.4,298.7 395.5,300.2 395.7,301.9 395.8,303.9 395.9,306.3 396.0,309.3 396.1,313.1 396.2,313.5 396.3,313.5 396.4,313.5 396.5,313.5 396.6,313.5 396.7,313.1 396.8,309.2 396.9,306.3 397.0,303.9 397.1,301.9 397.2,300.2 397.3,298.7 397.4,297.4 397.5,296.3 397.6,295.2 397.7,294.3 397.8,293.5 397.9,292.7 398.0,292.1 398.1,291.5 398.2,290.9 398.3,290.4 398.4,290.0 398.5,289.6 398.6,289.2 398.7,288.9 398.8,288.7 398.9,288.4 399.0,288.3 399.1,288.1 399.2,288.0 399.3,287.9 399.4,287.9 399.5,287.9 399.6,287.9 399.7,288.0 399.8,288.1 399.9,288.2 400.0,288.4 400.1,288.6 400.2,288.9 400.3,289.2 400.4,289.5 400.5,289.9 400.7,290.3 400.8,290.8 400.9,291.4 401.0,291.9 401.1,292.6 401.2,293.3 401.3,294.2 401.4,295.1 401.5,296.1 401.6,297.2 401.7,298.4 401.8,299.9 401.9,301.5 402.0,303.4 402.1,305.7 402.2,308.5 402.3,312.0 402.4,313.5 402.5,313.5 402.6,313.5 402.7,313.5 402.8,313.5 402.9,313.5 403.0,310.3 403.1,307.2 403.2,304.6 403.3,302.5 403.4,300.8 403.5,299.2 403.6,297.9 403.7,296.7 403.8,295.6 403.9,294.6 404.0,293.8 404.1,293.0 404.2,292.3 404.3,291.7 404.4,291.1 404.5,290.6 404.6,290.1 404.7,289.7 404.8,289.4 404.9,289.0 405.0,288.8 405.1,288.5 405.2,288.3 405.3,288.2 405.4,288.0 405.5,287.9 405.7,287.9 405.8,287.9 405.9,287.9 406.0,287.9 406.1,288.0 406.2,288.1 406.3,288.3 406.4,288.5 406.5,288.7 406.6,289.0 406.7,289.3 406.8,289.7 406.9,290.1 407.0,290.5 407.1,291.0 407.2,291.6 407.3,292.2 407.4,292.9 407.5,293.6 407.6,294.5 407.7,295.4 407.8,296.4 407.9,297.6 408.0,298.9 408.1,300.4 408.2,302.1 408.3,304.1 408.4,306.5 408.5,309.5 408.6,313.4 408.7,313.5 408.8,313.5 408.9,313.5 409.0,313.5 409.1,313.5 409.2,313.1 409.3,309.3 409.4,306.4 409.5,304.0 409.6,302.0 409.7,300.3 409.8,298.8 409.9,297.5 410.0,296.4 410.1,295.3 410.2,294.4 410.3,293.6 410.4,292.8 410.5,292.1 410.7,291.5 410.8,291.0 410.9,290.5 411.0,290.0 411.1,289.6 411.2,289.3 411.3,289.0 411.4,288.7 411.5,288.5 411.6,288.3 411.7,288.1 411.8,288.0 411.9,287.9 412.0,287.9 412.1,287.8 412.2,287.9 412.3,287.9 412.4,288.0 412.5,288.1 412.6,288.3 412.7,288.5 412.8,288.7 412.9,289.0 413.0,289.3 413.1,289.7 413.2,290.1 413.3,290.5 413.4,291.0 413.5,291.6 413.6,292.2 413.7,292.9 413.8,293.6 413.9,294.4 414.0,295.4 414.1,296.4 414.2,297.6 414.3,298.9 414.4,300.3 414.5,302.0 414.6,304.0 414.7,306.4 414.8,309.3 414.9,313.1 415.0,313.5 415.1,313.5 415.2,313.5 415.3,313.5 415.4,313.5 415.6,313.5 415.7,309.6 415.8,306.6 415.9,304.2 416.0,302.2 416.1,300.5 416.2,299.0 416.3,297.7 416.4,296.5 416.5,295.5 416.6,294.5 416.7,293.7 416.8,292.9 416.9,292.3 417.0,291.6 417.1,291.1 417.2,290.6 417.3,290.1 417.4,289.7 417.5,289.4 417.6,289.0 417.7,288.8 417.8,288.5 417.9,288.3 418.0,288.2 418.1,288.0 418.2,288.0 418.3,287.9 418.4,287.9 418.5,287.9 418.6,287.9 418.7,288.0 418.8,288.1 418.9,288.3 419.0,288.5 419.1,288.7 419.2,289.0 419.3,289.3 419.4,289.6 419.5,290.0 419.6,290.5 419.7,291.0 419.8,291.5 419.9,292.1 420.0,292.8 420.1,293.5 420.2,294.3 420.3,295.2 420.4,296.2 420.6,297.4 420.7,298.6 420.8,300.1 420.9,301.7 421.0,303.6 421.1,305.9 421.2,308.7 421.3,312.3 421.4,313.5 421.5,313.5 421.6,313.5 421.7,313.5 421.8,313.5 421.9,313.5 422.0,310.4 422.1,307.3 422.2,304.8 422.3,302.7 422.4,300.9 422.5,299.4 422.6,298.0 422.7,296.8 422.8,295.7 422.9,294.8 423.0,293.9 423.1,293.2 423.2,292.4 423.3,291.8 423.4,291.2 423.5,290.7 423.6,290.3 423.7,289.8 423.8,289.5 423.9,289.1 424.0,288.9 424.1,288.6 424.2,288.4 424.3,288.2 424.4,288.1 424.5,288.0 424.6,287.9 424.7,287.9 424.8,287.9 424.9,287.9 425.0,288.0 425.1,288.1 425.2,288.2 425.3,288.4 425.4,288.6 425.6,288.9 425.7,289.2 425.8,289.5 425.9,289.9 426.0,290.3 426.1,290.8 426.2,291.3 426.3,291.9 426.4,292.5 426.5,293.2 426.6,294.0 426.7,294.9 426.8,295.9 426.9,296.9 427.0,298.1 427.1,299.5 427.2,301.1 427.3,302.9 427.4,305.0 427.5,307.5 427.6,310.7 427.7,313.5 427.8,313.5 427.9,313.5 428.0,313.5 428.1,313.5 428.2,313.5 428.3,312.0 428.4,308.5 428.5,305.8 428.6,303.5 428.7,301.6 428.8,300.0 428.9,298.6 429.0,297.3 429.1,296.2 429.2,295.2 429.3,294.3 429.4,293.5 429.5,292.8 429.6,292.1 429.7,291.5 429.8,291.0 429.9,290.5 430.0,290.0 430.1,289.6 430.2,289.3 430.3,289.0 430.4,288.7 430.6,288.5 430.7,288.3 430.8,288.2 430.9,288.0 431.0,288.0 431.1,287.9 431.2,287.9 431.3,287.9 431.4,288.0 431.5,288.0 431.6,288.2 431.7,288.3 431.8,288.5 431.9,288.8 432.0,289.0 432.1,289.3 432.2,289.7 432.3,290.1 432.4,290.5 432.5,291.0 432.6,291.6 432.7,292.2 432.8,292.8 432.9,293.6 433.0,294.4 433.1,295.3 433.2,296.3 433.3,297.4 433.4,298.7 433.5,300.2 433.6,301.8 433.7,303.7 433.8,306.0 433.9,308.8 434.0,312.4 434.1,313.5 434.2,313.5 434.3,313.5 434.4,313.5 434.5,313.5 434.6,313.5 434.7,310.5 434.8,307.3 434.9,304.8 435.0,302.7 435.1,300.9 435.2,299.4 435.3,298.1 435.4,296.9 435.6,295.8 435.7,294.8 435.8,294.0 435.9,293.2 436.0,292.5 436.1,291.9 436.2,291.3 436.3,290.8 436.4,290.3 436.5,289.9 436.6,289.5 436.7,289.2 436.8,288.9 436.9,288.6 437.0,288.4 437.1,288.2 437.2,288.1 437.3,288.0 437.4,287.9 437.5,287.9 437.6,287.9 437.7,287.9 437.8,288.0 437.9,288.1 438.0,288.2 438.1,288.4 438.2,288.6 438.3,288.8 438.4,289.1 438.5,289.4 438.6,289.8 438.7,290.2 438.8,290.7 438.9,291.2 439.0,291.7 439.1,292.4 439.2,293.1 439.3,293.8 439.4,294.7 439.5,295.6 439.6,296.6 439.7,297.8 439.8,299.1 439.9,300.6 440.0,302.3 440.1,304.3 440.2,306.8 440.3,309.7 440.5,313.5 440.6,313.5 440.7,313.5 440.8,313.5 440.9,313.5 441.0,313.5 441.1,313.3 441.2,309.5 441.3,306.6 441.4,304.2 441.5,302.2 441.6,300.5 441.7,299.0 441.8,297.7 441.9,296.6 442.0,295.5 442.1,294.6 442.2,293.8 442.3,293.0 442.4,292.3 442.5,291.7 442.6,291.1 442.7,290.6 442.8,290.2 442.9,289.8 443.0,289.4 443.1,289.1 443.2,288.8 443.3,288.6 443.4,288.4 443.5,288.2 443.6,288.1 443.7,288.0 443.8,287.9 443.9,287.9 444.0,287.9 444.1,287.9 444.2,288.0 444.3,288.1 444.4,288.2 444.5,288.4 444.6,288.6 444.7,288.9 444.8,289.2 444.9,289.5 445.0,289.9 445.1,290.3 445.2,290.8 445.3,291.3 445.5,291.8 445.6,292.5 445.7,293.2 445.8,294.0 445.9,294.8 446.0,295.8 446.1,296.8 446.2,298.0 446.3,299.4 446.4,300.9 446.5,302.6 446.6,304.7 446.7,307.2 446.8,310.3 446.9,313.5 447.0,313.5 447.1,313.5 447.2,313.5 447.3,313.5 447.4,313.5 447.5,312.7 447.6,309.0 447.7,306.2 447.8,303.9 447.9,302.0 448.0,300.3 448.1,298.8 448.2,297.6 448.3,296.4 448.4,295.4 448.5,294.5 448.6,293.7 448.7,292.9 448.8,292.2 448.9,291.6 449.0,291.1 449.1,290.6 449.2,290.1 449.3,289.7 449.4,289.4 449.5,289.1 449.6,288.8 449.7,288.5 449.8,288.3 449.9,288.2 450.0,288.1 450.1,288.0 450.2,287.9 450.3,287.9 450.5,287.9 450.6,287.9 450.7,288.0 450.8,288.1 450.9,288.3 451.0,288.4 451.1,288.6 451.2,288.9 451.3,289.2 451.4,289.5 451.5,289.9 451.6,290.3 451.7,290.8 451.8,291.3 451.9,291.9 452.0,292.5 452.1,293.2 452.2,294.0 452.3,294.9 452.4,295.8 452.5,296.9 452.6,298.1 452.7,299.5 452.8,301.0 452.9,302.8 453.0,304.9 453.1,307.4 453.2,310.5 453.3,313.5 453.4,313.5 453.5,313.5 453.6,313.5 453.7,313.5 453.8,313.5 453.9,312.5 454.0,308.9 454.1,306.1 454.2,303.8 454.3,301.9 454.4,300.2 454.5,298.8 454.6,297.5 454.7,296.4 454.8,295.4 454.9,294.5 455.0,293.6 455.1,292.9 455.2,292.2 455.3,291.6 455.5,291.1 455.6,290.6 455.7,290.1 455.8,289.7 455.9,289.4 456.0,289.0 456.1,288.8 456.2,288.5 456.3,288.3 456.4,288.2 456.5,288.1 456.6,288.0 456.7,287.9 456.8,287.9 456.9,287.9 457.0,287.9 457.1,288.0 457.2,288.1 457.3,288.3 457.4,288.4 457.5,288.6 457.6,288.9 457.7,289.2 457.8,289.5 457.9,289.9 458.0,290.3 458.1,290.8 458.2,291.3 458.3,291.9 458.4,292.5 458.5,293.2 458.6,294.0 458.7,294.9 458.8,295.8 458.9,296.9 459.0,298.1 459.1,299.4 459.2,301.0 459.3,302.7 459.4,304.8 459.5,307.3 459.6,310.4 459.7,313.5 459.8,313.5 459.9,313.5 460.0,313.5 460.1,313.5 460.2,313.5 460.4,312.6 460.5,309.0 460.6,306.2 460.7,303.9 460.8,301.9 460.9,300.3 461.0,298.8 461.1,297.6 461.2,296.4 461.3,295.4 461.4,294.5 461.5,293.7 461.6,292.9 461.7,292.2 461.8,291.6 461.9,291.1 462.0,290.6 462.1,290.1 462.2,289.7 462.3,289.4 462.4,289.1 462.5,288.8 462.6,288.6 462.7,288.4 462.8,288.2 462.9,288.1 463.0,288.0 463.1,287.9 463.2,287.9 463.3,287.9 463.4,287.9 463.5,288.0 463.6,288.1 463.7,288.2 463.8,288.4 463.9,288.6 464.0,288.9 464.1,289.2 464.2,289.5 464.3,289.9 464.4,290.3 464.5,290.8 464.6,291.3 464.7,291.8 464.8,292.5 464.9,293.2 465.0,293.9 465.1,294.8 465.2,295.7 465.4,296.8 465.5,298.0 465.6,299.3 465.7,300.8 465.8,302.6 465.9,304.6 466.0,307.0 466.1,310.1 466.2,313.5 466.3,313.5 466.4,313.5 466.5,313.5 466.6,313.5 466.7,313.5 466.8,313.0 466.9,309.3 467.0,306.4 467.1,304.1 467.2,302.1 467.3,300.5 467.4,299.0 467.5,297.7 467.6,296.5 467.7,295.5 467.8,294.6 467.9,293.8 468.0,293.0 468.1,292.3 468.2,291.7 468.3,291.2 468.4,290.6 468.5,290.2 468.6,289.8 468.7,289.4 468.8,289.1 468.9,288.8 469.0,288.6 469.1,288.4 469.2,288.2 469.3,288.1 469.4,288.0 469.5,287.9 469.6,287.9 469.7,287.9 469.8,287.9 469.9,288.0 470.0,288.1 470.1,288.2 470.2,288.4 470.4,288.6 470.5,288.8 470.6,289.1 470.7,289.5 470.8,289.8 470.9,290.2 471.0,290.7 471.1,291.2 471.2,291.8 471.3,292.4 471.4,293.1 471.5,293.8 471.6,294.7 471.7,295.6 471.8,296.6 471.9,297.8 472.0,299.1 472.1,300.6 472.2,302.3 472.3,304.3 472.4,306.6 472.5,309.6 472.6,313.3 472.7,313.5 472.8,313.5 472.9,313.5 473.0,313.5 473.1,313.5 473.2,313.5 473.3,309.9 473.4,306.9 473.5,304.5 473.6,302.5 473.7,300.7 473.8,299.2 473.9,297.9 474.0,296.7 474.1,295.7 474.2,294.7 474.3,293.9 474.4,293.1 474.5,292.4 474.6,291.8 474.7,291.2 474.8,290.7 474.9,290.3 475.0,289.9 475.1,289.5 475.2,289.2 475.4,288.9 475.5,288.6 475.6,288.4 475.7,288.2 475.8,288.1 475.9,288.0 476.0,287.9 476.1,287.9 476.2,287.9 476.3,287.9 476.4,288.0 476.5,288.1 476.6,288.2 476.7,288.4 476.8,288.6 476.9,288.8 477.0,289.1 477.1,289.4 477.2,289.7 477.3,290.1 477.4,290.6 477.5,291.1 477.6,291.6 477.7,292.3 477.8,292.9 477.9,293.7 478.0,294.5 478.1,295.4 478.2,296.4 478.3,297.5 478.4,298.8 478.5,300.3 478.6,301.9 478.7,303.8 478.8,306.1 478.9,308.9 479.0,312.5 479.1,313.5 479.2,313.5 479.3,313.5 479.4,313.5 479.5,313.5 479.6,313.5 479.7,310.6 479.8,307.5 479.9,305.0 480.0,302.9 480.1,301.1 480.3,299.5 480.4,298.2 480.5,297.0 480.6,295.9 480.7,295.0 480.8,294.1 480.9,293.3 481.0,292.6 481.1,292.0 481.2,291.4 481.3,290.9 481.4,290.4 481.5,290.0 481.6,289.6 481.7,289.2 481.8,288.9 481.9,288.7 482.0,288.5 482.1,288.3 482.2,288.1 482.3,288.0 482.4,287.9 482.5,287.9 482.6,287.9 482.7,287.9 482.8,288.0 482.9,288.0 483.0,288.2 483.1,288.3 483.2,288.5 483.3,288.7 483.4,289.0 483.5,289.3 483.6,289.7 483.7,290.1 483.8,290.5 483.9,291.0 484.0,291.5 484.1,292.1 484.2,292.8 484.3,293.5 484.4,294.3 484.5,295.2 484.6,296.2 484.7,297.3 484.8,298.5 484.9,299.9 485.0,301.5 485.1,303.3 485.3,305.5 485.4,308.1 485.5,311.4 485.6,313.5 485.7,313.5 485.8,313.5 485.9,313.5 486.0,313.5 486.1,313.5 486.2,311.6 486.3,308.2 486.4,305.6 486.5,303.4 486.6,301.5 486.7,299.9 486.8,298.5 486.9,297.3 487.0,296.2 487.1,295.2 487.2,294.3 487.3,293.5 487.4,292.8 487.5,292.1 487.6,291.5 487.7,291.0 487.8,290.5 487.9,290.1 488.0,289.7 488.1,289.3 488.2,289.0 488.3,288.8 488.4,288.5 488.5,288.3 488.6,288.2 488.7,288.1 488.8,288.0 488.9,287.9 489.0,287.9 489.1,287.9 489.2,287.9 489.3,288.0 489.4,288.1 489.5,288.3 489.6,288.5 489.7,288.7 489.8,288.9 489.9,289.2 490.0,289.6 490.1,289.9 490.3,290.4 490.4,290.8 490.5,291.4 490.6,291.9 490.7,292.6 490.8,293.3 490.9,294.0 491.0,294.9 491.1,295.9 491.2,296.9 491.3,298.1 491.4,299.5 491.5,301.0 491.6,302.7 491.7,304.8 491.8,307.3 491.9,310.4 492.0,313.5 492.1,313.5 492.2,313.5 492.3,313.5 492.4,313.5 492.5,313.5 492.6,312.8 492.7,309.2 492.8,306.3 492.9,304.0 493.0,302.1 493.1,300.4 493.2,298.9 493.3,297.7 493.4,296.5 493.5,295.5 493.6,294.6 493.7,293.8 493.8,293.0 493.9,292.3 494.0,291.7 494.1,291.2 494.2,290.7 494.3,290.2 494.4,289.8 494.5,289.4 494.6,289.1 494.7,288.8 494.8,288.6 494.9,288.4 495.0,288.2 495.1,288.1 495.3,288.0 495.4,287.9 495.5,287.9 495.6,287.9 495.7,287.9 495.8,288.0 495.9,288.1 496.0,288.2 496.1,288.4 496.2,288.6 496.3,288.8 496.4,289.1 496.5,289.5 496.6,289.8 496.7,290.2 496.8,290.7 496.9,291.2 497.0,291.7 497.1,292.3 497.2,293.0 497.3,293.8 497.4,294.6 497.5,295.5 497.6,296.6 497.7,297.7 497.8,299.0 497.9,300.5 498.0,302.1 498.1,304.1 498.2,306.4 498.3,309.3 498.4,312.9 498.5,313.5 498.6,313.5 498.7,313.5 498.8,313.5 498.9,313.5 499.0,313.5 499.1,310.3 499.2,307.2 499.3,304.7 499.4,302.7 499.5,300.9 499.6,299.4 499.7,298.1 499.8,296.9 499.9,295.8 500.0,294.9 500.2,294.0 500.3,293.2 500.4,292.5 500.5,291.9 500.6,291.3 500.7,290.8 500.8,290.4 500.9,289.9 501.0,289.6 501.1,289.2 501.2,288.9 501.3,288.7 501.4,288.5 501.5,288.3 501.6,288.1 501.7,288.0 501.8,287.9 501.9,287.9 502.0,287.9 502.1,287.9 502.2,288.0 502.3,288.1 502.4,288.2 502.5,288.3 502.6,288.5 502.7,288.8 502.8,289.0 502.9,289.3 503.0,289.7 503.1,290.1 503.2,290.5 503.3,291.0 503.4,291.5 503.5,292.1 503.6,292.8 503.7,293.5 503.8,294.3 503.9,295.2 504.0,296.2 504.1,297.3 504.2,298.5 504.3,299.9 504.4,301.5 504.5,303.3 504.6,305.5 504.7,308.1 504.8,311.5 504.9,313.5 505.0,313.5 505.2,313.5 505.3,313.5 505.4,313.5 505.5,313.5 505.6,311.6 505.7,308.3 505.8,305.6 505.9,303.4 506.0,301.6 506.1,300.0 506.2,298.5 506.3,297.3 506.4,296.2 506.5,295.2 506.6,294.3 506.7,293.5 506.8,292.8 506.9,292.1 507.0,291.5 507.1,291.0 507.2,290.5 507.3,290.1 507.4,289.7 507.5,289.3 507.6,289.0 507.7,288.8 507.8,288.5 507.9,288.3 508.0,288.2 508.1,288.1 508.2,288.0 508.3,287.9 508.4,287.9 508.5,287.9 508.6,287.9 508.7,288.0 508.8,288.1 508.9,288.3 509.0,288.4 509.1,288.7 509.2,288.9 509.3,289.2 509.4,289.5 509.5,289.9 509.6,290.3 509.7,290.8 509.8,291.3 509.9,291.9 510.0,292.5 510.2,293.2 510.3,294.0 510.4,294.8 510.5,295.8 510.6,296.8 510.7,298.0 510.8,299.3 510.9,300.8 511.0,302.6 511.1,304.6 511.2,307.0 511.3,310.0 511.4,313.5 511.5,313.5 511.6,313.5 511.7,313.5 511.8,313.5 511.9,313.5 512.0,313.2 512.1,309.5 512.2,306.6 512.3,304.2 512.4,302.3 512.5,300.6 512.6,299.1 512.7,297.8 512.8,296.6 512.9,295.6 513.0,294.7 513.1,293.8 513.2,293.1 513.3,292.4 513.4,291.8 513.5,291.2 513.6,290.7 513.7,290.2 513.8,289.8 513.9,289.5 514.0,289.1 514.1,288.9 514.2,288.6 514.3,288.4 514.4,288.2 514.5,288.1 514.6,288.0 514.7,287.9 514.8,287.9 514.9,287.9 515.0,287.9 515.2,288.0 515.3,288.1 515.4,288.2 515.5,288.3 515.6,288.5 515.7,288.8 515.8,289.1 515.9,289.4 516.0,289.7 516.1,290.1 516.2,290.6 516.3,291.1 516.4,291.6 516.5,292.2 516.6,292.9 516.7,293.6 516.8,294.4 516.9,295.3 517.0,296.3 517.1,297.4 517.2,298.7 517.3,300.1 517.4,301.8 517.5,303.6 517.6,305.9 517.7,308.6 517.8,312.1 517.9,313.5 518.0,313.5 518.1,313.5 518.2,313.5 518.3,313.5 518.4,313.5 518.5,311.0 518.6,307.8 518.7,305.2 518.8,303.1 518.9,301.3 519.0,299.7 519.1,298.3 519.2,297.1 519.3,296.0 519.4,295.1 519.5,294.2 519.6,293.4 519.7,292.7 519.8,292.0 519.9,291.4 520.1,290.9 520.2,290.4 520.3,290.0 520.4,289.6 520.5,289.3 520.6,289.0 520.7,288.7 520.8,288.5 520.9,288.3 521.0,288.1 521.1,288.0 521.2,287.9 521.3,287.9 521.4,287.8 521.5,287.9 521.6,287.9 521.7,288.0 521.8,288.1 521.9,288.2 522.0,288.4 522.1,288.6 522.2,288.9 522.3,289.2 522.4,289.5 522.5,289.9 522.6,290.3 522.7,290.8 522.8,291.3 522.9,291.9 523.0,292.5 523.1,293.2 523.2,294.0 523.3,294.9 523.4,295.8 523.5,296.9 523.6,298.1 523.7,299.4 523.8,300.9 523.9,302.7 524.0,304.7 524.1,307.2 524.2,310.2 524.3,313.5 524.4,313.5 524.5,313.5 524.6,313.5 524.7,313.5 524.8,313.5 524.9,312.9 525.1,309.3 525.2,306.4 525.3,304.1 525.4,302.1 525.5,300.4 525.6,299.0 525.7,297.7 525.8,296.5 525.9,295.5 526.0,294.6 526.1,293.8 526.2,293.0 526.3,292.3 526.4,291.7 526.5,291.1 526.6,290.6 526.7,290.2 526.8,289.8 526.9,289.4 527.0,289.1 527.1,288.8 527.2,288.6 527.3,288.4 527.4,288.2 527.5,288.1 527.6,287.9 527.7,287.9 527.8,287.8 527.9,287.8 528.0,287.9 528.1,287.9 528.2,288.0 528.3,288.2 528.4,288.3 528.5,288.5 528.6,288.8 528.7,289.0 528.8,289.3 528.9,289.7 529.0,290.1 529.1,290.5 529.2,291.0 529.3,291.6 529.4,292.2 529.5,292.8 529.6,293.6 529.7,294.4 529.8,295.3 529.9,296.3 530.1,297.4 530.2,298.7 530.3,300.1 530.4,301.7 530.5,303.6 530.6,305.8 530.7,308.5 530.8,312.0 530.9,313.5 531.0,313.5 531.1,313.5 531.2,313.5 531.3,313.5 531.4,313.5 531.5,311.1 531.6,307.9 531.7,305.3 531.8,303.1 531.9,301.3 532.0,299.7 532.1,298.4 532.2,297.2 532.3,296.1 532.4,295.1 532.5,294.2 532.6,293.4 532.7,292.7 532.8,292.0 532.9,291.5 533.0,290.9 533.1,290.4 533.2,290.0 533.3,289.6 533.4,289.3 533.5,289.0 533.6,288.7 533.7,288.5 533.8,288.3 533.9,288.1 534.0,288.0 534.1,287.9 534.2,287.9 534.3,287.9 534.4,287.9 534.5,287.9 534.6,288.0 534.7,288.1 534.8,288.3 534.9,288.4 535.1,288.7 535.2,288.9 535.3,289.2 535.4,289.5 535.5,289.9 535.6,290.3 535.7,290.8 535.8,291.3 535.9,291.9 536.0,292.5 536.1,293.2 536.2,294.0 536.3,294.8 536.4,295.8 536.5,296.8 536.6,298.0 536.7,299.4 536.8,300.9 536.9,302.6 537.0,304.7 537.1,307.1 537.2,310.1 537.3,313.5 537.4,313.5 537.5,313.5 537.6,313.5 537.7,313.5 537.8,313.5 537.9,313.2 538.0,309.4 538.1,306.5 538.2,304.2 538.3,302.2 538.4,300.5 538.5,299.1 538.6,297.8 538.7,296.6 538.8,295.6 538.9,294.7 539.0,293.8 539.1,293.1 539.2,292.4 539.3,291.8 539.4,291.2 539.5,290.7 539.6,290.2 539.7,289.8 539.8,289.5 540.0,289.1 540.1,288.9 540.2,288.6 540.3,288.4 540.4,288.2 540.5,288.1 540.6,288.0 540.7,287.9 540.8,287.9 540.9,287.9 541.0,287.9 541.1,288.0 541.2,288.1 541.3,288.2 541.4,288.4 541.5,288.6 541.6,288.8 541.7,289.1 541.8,289.4 541.9,289.7 542.0,290.1 542.1,290.6 542.2,291.1 542.3,291.6 542.4,292.2 542.5,292.9 542.6,293.6 542.7,294.4 542.8,295.3 542.9,296.3 543.0,297.4 543.1,298.7 543.2,300.1 543.3,301.7 543.4,303.6 543.5,305.8 543.6,308.5 543.7,311.9 543.8,313.5 543.9,313.5 544.0,313.5 544.1,313.5 544.2,313.5 544.3,313.5 544.4,311.2 544.5,308.0 544.6,305.4 544.7,303.2 544.8,301.4 545.0,299.8 545.1,298.4 545.2,297.2 545.3,296.1 545.4,295.1 545.5,294.3 545.6,293.5 545.7,292.7 545.8,292.1 545.9,291.5 546.0,291.0 546.1,290.5 546.2,290.1 546.3,289.7 546.4,289.3 546.5,289.0 546.6,288.8 546.7,288.5 546.8,288.3 546.9,288.2 547.0,288.1 547.1,288.0 547.2,287.9 547.3,287.9 547.4,287.9 547.5,287.9 547.6,288.0 547.7,288.1 547.8,288.3 547.9,288.5 548.0,288.7 548.1,288.9 548.2,289.2 548.3,289.5 548.4,289.9 548.5,290.3 548.6,290.8 548.7,291.3 548.8,291.9 548.9,292.5 549.0,293.2 549.1,294.0 549.2,294.8 549.3,295.8 549.4,296.8 549.5,298.0 549.6,299.3 549.7,300.8 549.8,302.6 550.0,304.6 550.1,307.0 550.2,310.0 550.3,313.5 550.4,313.5 550.5,313.5 550.6,313.5 550.7,313.5 550.8,313.5 550.9,313.3 551.0,309.6 551.1,306.7 551.2,304.3 551.3,302.3 551.4,300.6 551.5,299.1 551.6,297.8 551.7,296.7 551.8,295.7 551.9,294.7 552.0,293.9 552.1,293.1 552.2,292.4 552.3,291.8 552.4,291.2 552.5,290.7 552.6,290.3 552.7,289.9 552.8,289.5 552.9,289.2 553.0,288.9 553.1,288.6 553.2,288.4 553.3,288.3 553.4,288.1 553.5,288.0 553.6,287.9 553.7,287.9 553.8,287.9 553.9,287.9 554.0,288.0 554.1,288.1 554.2,288.2 554.3,288.4 554.4,288.6 554.5,288.8 554.6,289.1 554.7,289.4 554.8,289.7 555.0,290.1 555.1,290.5 555.2,291.0 555.3,291.6 555.4,292.2 555.5,292.8 555.6,293.6 555.7,294.4 555.8,295.3 555.9,296.3 556.0,297.4 556.1,298.6 556.2,300.0 556.3,301.6 556.4,303.5 556.5,305.7 556.6,308.3 556.7,311.7 556.8,313.5 556.9,313.5 557.0,313.5 557.1,313.5 557.2,313.5 557.3,313.5 557.4,311.5 557.5,308.1 557.6,305.5 557.7,303.3 557.8,301.5 557.9,299.9 558.0,298.5 558.1,297.3 558.2,296.2 558.3,295.2 558.4,294.3 558.5,293.5 558.6,292.8 558.7,292.1 558.8,291.5 558.9,291.0 559.0,290.5 559.1,290.1 559.2,289.7 559.3,289.3 559.4,289.0 559.5,288.8 559.6,288.5 559.7,288.3 559.8,288.2 560.0,288.1 560.1,288.0 560.2,287.9 560.3,287.9 560.4,287.9 560.5,287.9 560.6,288.0 560.7,288.1 560.8,288.3 560.9,288.4 561.0,288.6 561.1,288.9 561.2,289.2 561.3,289.5 561.4,289.9 561.5,290.3 561.6,290.8 561.7,291.3 561.8,291.8 561.9,292.5 562.0,293.1 562.1,293.9 562.2,294.7 562.3,295.7 562.4,296.7 562.5,297.9 562.6,299.2 562.7,300.7 562.8,302.4 562.9,304.4 563.0,306.8 563.1,309.7 563.2,313.5 563.3,313.5 563.4,313.5 563.5,313.5 563.6,313.5 563.7,313.5 563.8,313.5 563.9,309.9 564.0,306.9 564.1,304.5 564.2,302.5 564.3,300.8 564.4,299.3 564.5,297.9 564.6,296.8 564.7,295.7 564.9,294.8 565.0,293.9 565.1,293.2 565.2,292.5 565.3,291.9 565.4,291.3 565.5,290.8 565.6,290.3 565.7,289.9 565.8,289.5 565.9,289.2 566.0,288.9 566.1,288.6 566.2,288.4 566.3,288.2 566.4,288.1 566.5,288.0 566.6,287.9 566.7,287.9 566.8,287.9 566.9,287.9 567.0,287.9 567.1,288.0 567.2,288.1 567.3,288.3 567.4,288.5 567.5,288.7 567.6,289.0 567.7,289.3 567.8,289.6 567.9,290.0 568.0,290.5 568.1,290.9 568.2,291.5 568.3,292.1 568.4,292.7 568.5,293.4 568.6,294.2 568.7,295.1 568.8,296.1 568.9,297.2 569.0,298.4 569.1,299.8 569.2,301.3 569.3,303.1 569.4,305.3 569.5,307.9 569.6,311.1 569.7,313.5 569.9,313.5 570.0,313.5 570.1,313.5 570.2,313.5 570.3,313.5 570.4,312.0 570.5,308.6 570.6,305.8 570.7,303.6 570.8,301.7 570.9,300.1 571.0,298.7 571.1,297.4 571.2,296.3 571.3,295.3 571.4,294.4 571.5,293.6 571.6,292.9 571.7,292.2 571.8,291.6 571.9,291.0 572.0,290.5 572.1,290.1 572.2,289.7 572.3,289.3 572.4,289.0 572.5,288.8 572.6,288.5 572.7,288.3 572.8,288.2 572.9,288.0 573.0,287.9 573.1,287.9 573.2,287.8 573.3,287.8 573.4,287.9 573.5,287.9 573.6,288.0 573.7,288.2 573.8,288.3 573.9,288.5 574.0,288.8 574.1,289.1 574.2,289.4 574.3,289.7 574.4,290.1 574.5,290.6 574.6,291.1 574.7,291.6 574.9,292.3 575.0,292.9 575.1,293.7 575.2,294.5 575.3,295.4 575.4,296.4 575.5,297.5 575.6,298.8 575.7,300.3 575.8,301.9 575.9,303.8 576.0,306.1 576.1,308.9 576.2,312.4 576.3,313.5 576.4,313.5 576.5,313.5 576.6,313.5 576.7,313.5 576.8,313.5 576.9,310.8 577.0,307.6 577.1,305.1 577.2,303.0 577.3,301.2 577.4,299.6 577.5,298.3 577.6,297.1 577.7,296.0 577.8,295.0 577.9,294.1 578.0,293.4 578.1,292.6 578.2,292.0 578.3,291.4 578.4,290.9 578.5,290.4 578.6,290.0 578.7,289.6 578.8,289.3 578.9,289.0 579.0,288.7 579.1,288.5 579.2,288.3 579.3,288.1 579.4,288.0 579.5,287.9 579.6,287.9 579.7,287.9 579.9,287.9 580.0,287.9 580.1,288.0 580.2,288.1 580.3,288.3 580.4,288.4 580.5,288.7 580.6,288.9 580.7,289.2 580.8,289.5 580.9,289.9 581.0,290.3 581.1,290.8 581.2,291.3 581.3,291.9 581.4,292.5 581.5,293.2 581.6,294.0 581.7,294.9 581.8,295.8 581.9,296.9 582.0,298.0 582.1,299.4 582.2,300.9 582.3,302.6 582.4,304.7 582.5,307.1 582.6,310.1 582.7,313.5 582.8,313.5 582.9,313.5 583.0,313.5 583.1,313.5 583.2,313.5 583.3,313.2 583.4,309.5 583.5,306.6 583.6,304.2 583.7,302.3 583.8,300.6 583.9,299.1 584.0,297.8 584.1,296.6 584.2,295.6 584.3,294.7 584.4,293.9 584.5,293.1 584.6,292.4 584.8,291.8 584.9,291.2 585.0,290.7 585.1,290.3 585.2,289.9 585.3,289.5 585.4,289.2 585.5,288.9 585.6,288.6 585.7,288.4 585.8,288.2 585.9,288.1 586.0,288.0 586.1,287.9 586.2,287.9 586.3,287.9 586.4,287.9 586.5,288.0 586.6,288.1 586.7,288.2 586.8,288.3 586.9,288.5 587.0,288.8 587.1,289.0 587.2,289.4 587.3,289.7 587.4,290.1 587.5,290.5 587.6,291.0 587.7,291.6 587.8,292.2 587.9,292.8 588.0,293.5 588.1,294.3 588.2,295.2 588.3,296.2 588.4,297.3 588.5,298.6 588.6,300.0 588.7,301.6 588.8,303.4 588.9,305.6 589.0,308.2 589.1,311.6 589.2,313.5 589.3,313.5 589.4,313.5 589.5,313.5 589.6,313.5 589.8,313.5 589.9,311.6 590.0,308.3 590.1,305.6 590.2,303.4 590.3,301.6 590.4,300.0 590.5,298.6 590.6,297.3 590.7,296.2 590.8,295.2 590.9,294.4 591.0,293.6 591.1,292.8 591.2,292.2 591.3,291.6 591.4,291.0 591.5,290.5 591.6,290.1 591.7,289.7 591.8,289.4 591.9,289.1 592.0,288.8 592.1,288.6 592.2,288.4 592.3,288.2 592.4,288.1 592.5,288.0 592.6,287.9 592.7,287.9 592.8,287.9 592.9,287.9 593.0,288.0 593.1,288.1 593.2,288.3 593.3,288.4 593.4,288.6 593.5,288.9 593.6,289.2 593.7,289.5 593.8,289.9 593.9,290.3 594.0,290.7 594.1,291.2 594.2,291.8 594.3,292.4 594.4,293.1 594.5,293.9 594.6,294.7 594.8,295.6 594.9,296.7 595.0,297.8 595.1,299.1 595.2,300.6 595.3,302.3 595.4,304.2 595.5,306.6 595.6,309.5 595.7,313.2 595.8,313.5 595.9,313.5 596.0,313.5 596.1,313.5 596.2,313.5 596.3,313.5 596.4,310.2 596.5,307.1 596.6,304.7 596.7,302.7 596.8,300.9 596.9,299.4 597.0,298.1 597.1,296.9 597.2,295.8 597.3,294.9 597.4,294.0 597.5,293.3 597.6,292.6 597.7,291.9 597.8,291.4 597.9,290.8 598.0,290.4 598.1,289.9 598.2,289.6 598.3,289.2 598.4,288.9 598.5,288.7 598.6,288.5 598.7,288.3 598.8,288.1 598.9,288.0 599.0,287.9 599.1,287.9 599.2,287.9 599.3,287.9 599.4,288.0 599.5,288.0 599.6,288.2 599.8,288.3 599.9,288.5 600.0,288.7 600.1,289.0 600.2,289.3 600.3,289.6 600.4,290.0 600.5,290.4 600.6,290.9 600.7,291.4 600.8,292.0 600.9,292.7 601.0,293.4 601.1,294.2 601.2,295.0 601.3,296.0 601.4,297.1 601.5,298.3 601.6,299.6 601.7,301.2 601.8,303.0 601.9,305.1 602.0,307.6 602.1,310.8 602.2,313.5 602.3,313.5 602.4,313.5 602.5,313.5 602.6,313.5 602.7,313.5 602.8,312.4 602.9,308.9 603.0,306.1 603.1,303.9 603.2,301.9 603.3,300.3 603.4,298.9 603.5,297.6 603.6,296.5 603.7,295.4 603.8,294.5 603.9,293.7 604.0,293.0 604.1,292.3 604.2,291.7 604.3,291.1 604.4,290.6 604.5,290.2 604.7,289.8 604.8,289.4 604.9,289.1 605.0,288.8 605.1,288.6 605.2,288.4 605.3,288.2 605.4,288.1 605.5,288.0 605.6,287.9 605.7,287.9 605.8,287.9 605.9,287.9 606.0,288.0 606.1,288.1 606.2,288.2 606.3,288.4 606.4,288.6 606.5,288.8 606.6,289.1 606.7,289.4 606.8,289.8 606.9,290.2 607.0,290.6 607.1,291.1 607.2,291.6 607.3,292.2 607.4,292.9 607.5,293.7 607.6,294.5 607.7,295.4 607.8,296.4 607.9,297.5 608.0,298.8 608.1,300.2 608.2,301.8 608.3,303.7 608.4,305.9 608.5,308.7 608.6,312.1 608.7,313.5 608.8,313.5 608.9,313.5 609.0,313.5 609.1,313.5 609.2,313.5 609.3,311.0 609.4,307.8 609.5,305.2 609.7,303.1 609.8,301.3 609.9,299.7 610.0,298.4 610.1,297.1 610.2,296.1 610.3,295.1 610.4,294.2 610.5,293.4 610.6,292.7 610.7,292.0 610.8,291.5 610.9,290.9 611.0,290.4 611.1,290.0 611.2,289.6 611.3,289.3 611.4,289.0 611.5,288.7 611.6,288.5 611.7,288.3 611.8,288.1 611.9,288.0 612.0,287.9 612.1,287.9 612.2,287.8 612.3,287.9 612.4,287.9 612.5,288.0 612.6,288.1 612.7,288.2 612.8,288.4 612.9,288.6 613.0,288.9 613.1,289.2 613.2,289.5 613.3,289.9 613.4,290.3 613.5,290.7 613.6,291.2 613.7,291.8 613.8,292.4 613.9,293.1 614.0,293.9 614.1,294.7 614.2,295.7 614.3,296.7 614.4,297.9 614.5,299.2 614.7,300.7 614.8,302.4 614.9,304.3 615.0,306.7 615.1,309.6 615.2,313.4 615.3,313.5 615.4,313.5 615.5,313.5 615.6,313.5 615.7,313.5 615.8,313.5 615.9,309.9 616.0,306.9 616.1,304.5 616.2,302.5 616.3,300.8 616.4,299.3 616.5,298.0 616.6,296.8 616.7,295.7 616.8,294.8 616.9,293.9 617.0,293.2 617.1,292.5 617.2,291.9 617.3,291.3 617.4,290.8 617.5,290.3 617.6,289.9 617.7,289.5 617.8,289.2 617.9,288.9 618.0,288.6 618.1,288.4 618.2,288.2 618.3,288.1 618.4,288.0 618.5,287.9 618.6,287.9 618.7,287.8 618.8,287.9 618.9,287.9 619.0,288.0 619.1,288.1 619.2,288.3 619.3,288.5 619.4,288.7 619.5,289.0 619.7,289.3 619.8,289.6 619.9,290.0 620.0,290.4 620.1,290.9 620.2,291.4 620.3,292.0 620.4,292.6 620.5,293.4 620.6,294.1 620.7,295.0 620.8,296.0 620.9,297.0 621.0,298.3 621.1,299.6 621.2,301.2 621.3,302.9 621.4,305.0 621.5,307.6 621.6,310.7 621.7,313.5 621.8,313.5 621.9,313.5 622.0,313.5 622.1,313.5 622.2,313.5 622.3,312.5 622.4,308.9 622.5,306.2 622.6,303.9 622.7,302.0 622.8,300.3 622.9,298.9 623.0,297.6 623.1,296.5 623.2,295.5 623.3,294.5 623.4,293.7 623.5,293.0 623.6,292.3 623.7,291.7 623.8,291.1 623.9,290.6 624.0,290.2 624.1,289.8 624.2,289.4 624.3,289.1 624.4,288.8 624.6,288.6 624.7,288.4 624.8,288.2 624.9,288.1 625.0,288.0 625.1,287.9 625.2,287.9 625.3,287.9 625.4,287.9 625.5,288.0 625.6,288.1 625.7,288.2 625.8,288.4 625.9,288.6 626.0,288.8 626.1,289.1 626.2,289.4 626.3,289.7 626.4,290.1 626.5,290.6 626.6,291.1 626.7,291.6 626.8,292.2 626.9,292.9 627.0,293.6 627.1,294.5 627.2,295.4 627.3,296.4 627.4,297.5 627.5,298.7 627.6,300.1 627.7,301.8 627.8,303.7 627.9,305.9 628.0,308.6 628.1,312.0 628.2,313.5 628.3,313.5 628.4,313.5 628.5,313.5 628.6,313.5 628.7,313.5 628.8,311.2 628.9,307.9 629.0,305.3 629.1,303.2 629.2,301.4 629.3,299.8 629.4,298.4 629.6,297.2 629.7,296.1 629.8,295.1 629.9,294.3 630.0,293.5 630.1,292.7 630.2,292.1 630.3,291.5 630.4,291.0 630.5,290.5 630.6,290.1 630.7,289.7 630.8,289.3 630.9,289.0 631.0,288.8 631.1,288.5 631.2,288.3 631.3,288.2 631.4,288.1 631.5,288.0 631.6,287.9 631.7,287.9 631.8,287.9 631.9,287.9 632.0,288.0 632.1,288.1 632.2,288.3 632.3,288.4 632.4,288.7 632.5,288.9 632.6,289.2 632.7,289.5 632.8,289.9 632.9,290.3 633.0,290.8 633.1,291.3 633.2,291.9 633.3,292.5 633.4,293.2 633.5,293.9 633.6,294.8 633.7,295.7 633.8,296.8 633.9,297.9 634.0,299.2 634.1,300.7 634.2,302.4 634.3,304.4 634.4,306.8 634.6,309.7 634.7,313.5 634.8,313.5 634.9,313.5 635.0,313.5 635.1,313.5 635.2,313.5 635.3,313.5 635.4,309.9 635.5,306.9 635.6,304.5 635.7,302.5 635.8,300.8 635.9,299.3 636.0,298.0 636.1,296.8 636.2,295.8 636.3,294.8 636.4,294.0 636.5,293.2 636.6,292.5 636.7,291.9 636.8,291.3 636.9,290.8 637.0,290.3 637.1,289.9 637.2,289.5 637.3,289.2 637.4,288.9 637.5,288.7 637.6,288.5 637.7,288.3 637.8,288.1 637.9,288.0 638.0,287.9 638.1,287.9 638.2,287.9 638.3,287.9 638.4,288.0 638.5,288.1 638.6,288.2 638.7,288.3 638.8,288.5 638.9,288.7 639.0,289.0 639.1,289.3 639.2,289.7 639.3,290.0 639.4,290.5 639.6,290.9 639.7,291.5 639.8,292.1 639.9,292.7 640.0,293.4 640.1,294.2 640.2,295.1 640.3,296.1 640.4,297.1 640.5,298.4 640.6,299.7 640.7,301.3 640.8,303.1 640.9,305.2 641.0,307.8 641.1,311.0 641.2,313.5 641.3,313.5 641.4,313.5 641.5,313.5 641.6,313.5 641.7,313.5 641.8,312.3 641.9,308.8 642.0,306.0 642.1,303.8 642.2,301.9 642.3,300.2 642.4,298.8 642.5,297.5 642.6,296.4 642.7,295.4 642.8,294.5 642.9,293.7 643.0,292.9 643.1,292.3 643.2,291.7 643.3,291.1 643.4,290.6 643.5,290.2 643.6,289.8 643.7,289.4 643.8,289.1 643.9,288.8 644.0,288.6 644.1,288.4 644.2,288.2 644.3,288.1 644.5,288.0 644.6,287.9 644.7,287.9 644.8,287.9 644.9,287.9 645.0,288.0 645.1,288.1 645.2,288.2 645.3,288.4 645.4,288.6 645.5,288.8 645.6,289.1 645.7,289.4 645.8,289.8 645.9,290.2 646.0,290.6 646.1,291.1 646.2,291.7 646.3,292.3 646.4,292.9 646.5,293.7 646.6,294.5 646.7,295.4 646.8,296.4 646.9,297.5 647.0,298.8 647.1,300.2 647.2,301.9 647.3,303.8 647.4,306.0 647.5,308.7 647.6,312.2 647.7,313.5 647.8,313.5 647.9,313.5 648.0,313.5 648.1,313.5 648.2,313.5 648.3,310.9 648.4,307.7 648.5,305.2 648.6,303.1 648.7,301.3 648.8,299.7 648.9,298.3 649.0,297.1 649.1,296.0 649.2,295.1 649.3,294.2 649.5,293.4 649.6,292.7 649.7,292.0 649.8,291.5 649.9,290.9 650.0,290.4 650.1,290.0 650.2,289.6 650.3,289.3 650.4,289.0 650.5,288.7 650.6,288.5 650.7,288.3 650.8,288.1 650.9,288.0 651.0,287.9 651.1,287.9 651.2,287.8 651.3,287.9 651.4,287.9 651.5,288.0 651.6,288.1 651.7,288.2 651.8,288.4 651.9,288.6 652.0,288.9 652.1,289.2 652.2,289.5 652.3,289.9 652.4,290.3 652.5,290.7 652.6,291.2 652.7,291.8 652.8,292.4 652.9,293.1 653.0,293.9 653.1,294.7 653.2,295.7 653.3,296.7 653.4,297.9 653.5,299.2 653.6,300.6 653.7,302.4 653.8,304.3 653.9,306.7 654.0,309.6 654.1,313.4 654.2,313.5 654.3,313.5 654.5,313.5 654.6,313.5 654.7,313.5 654.8,313.5 654.9,309.9 655.0,307.0 655.1,304.5 655.2,302.5 655.3,300.8 655.4,299.3 655.5,298.0 655.6,296.8 655.7,295.7 655.8,294.8 655.9,294.0 656.0,293.2 656.1,292.5 656.2,291.9 656.3,291.3 656.4,290.8 656.5,290.3 656.6,289.9 656.7,289.5 656.8,289.2 656.9,288.9 657.0,288.6 657.1,288.4 657.2,288.2 657.3,288.1 657.4,288.0 657.5,287.9 657.6,287.9 657.7,287.8 657.8,287.9 657.9,287.9 658.0,288.0 658.1,288.1 658.2,288.3 658.3,288.5 658.4,288.7 658.5,288.9 658.6,289.2 658.7,289.6 658.8,290.0 658.9,290.4 659.0,290.9 659.1,291.4 659.2,292.0 659.3,292.6 659.5,293.3 659.6,294.1 659.7,295.0 659.8,295.9 659.9,297.0 660.0,298.2 660.1,299.6 660.2,301.1 660.3,302.9 660.4,305.0 660.5,307.5 660.6,310.6 660.7,313.5 660.8,313.5 660.9,313.5 661.0,313.5 661.1,313.5 661.2,313.5 661.3,312.6 661.4,309.0 661.5,306.2 661.6,304.0 661.7,302.0 661.8,300.4 661.9,298.9 662.0,297.6 662.1,296.5 662.2,295.5 662.3,294.6 662.4,293.8 662.5,293.0 662.6,292.3 662.7,291.7 662.8,291.2 662.9,290.7 663.0,290.2 663.1,289.8 663.2,289.4 663.3,289.1 663.4,288.8 663.5,288.6 663.6,288.4 663.7,288.2 663.8,288.1 663.9,288.0 664.0,287.9 664.1,287.9 664.2,287.9 664.3,287.9 664.5,288.0 664.6,288.1 664.7,288.2 664.8,288.4 664.9,288.6 665.0,288.8 665.1,289.1 665.2,289.4 665.3,289.7 665.4,290.1 665.5,290.6 665.6,291.1 665.7,291.6 665.8,292.2 665.9,292.9 666.0,293.6 666.1,294.4 666.2,295.3 666.3,296.3 666.4,297.4 666.5,298.7 666.6,300.1 666.7,301.7 666.8,303.6 666.9,305.8 667.0,308.4 667.1,311.8 667.2,313.5 667.3,313.5 667.4,313.5 667.5,313.5 667.6,313.5 667.7,313.5 667.8,311.4 667.9,308.1 668.0,305.5 668.1,303.3 668.2,301.5 668.3,299.9 668.4,298.5 668.5,297.3 668.6,296.2 668.7,295.2 668.8,294.3 668.9,293.5 669.0,292.8 669.1,292.1 669.2,291.5 669.4,291.0 669.5,290.5 669.6,290.1 669.7,289.7 669.8,289.3 669.9,289.0 670.0,288.8 670.1,288.5 670.2,288.3 670.3,288.2 670.4,288.1 670.5,288.0 670.6,287.9 670.7,287.9 670.8,287.9 670.9,287.9 671.0,288.0 671.1,288.1 671.2,288.3 671.3,288.4 671.4,288.6 671.5,288.9 671.6,289.2 671.7,289.5 671.8,289.9 671.9,290.3 672.0,290.7 672.1,291.3 672.2,291.8 672.3,292.4 672.4,293.1 672.5,293.9 672.6,294.7 672.7,295.6 672.8,296.7 672.9,297.8 673.0,299.1 673.1,300.6 673.2,302.3 673.3,304.3 673.4,306.6 673.5,309.5 673.6,313.2 673.7,313.5 673.8,313.5 673.9,313.5 674.0,313.5 674.1,313.5 674.2,313.5 674.4,310.1 674.5,307.1 674.6,304.7 674.7,302.6 674.8,300.9 674.9,299.4 675.0,298.1 675.1,296.9 675.2,295.8 675.3,294.9 675.4,294.0 675.5,293.3 675.6,292.6 675.7,291.9 675.8,291.4 675.9,290.8 676.0,290.4 676.1,289.9 676.2,289.6 676.3,289.2 676.4,288.9 676.5,288.7 676.6,288.5 676.7,288.3 676.8,288.1 676.9,288.0 677.0,287.9 677.1,287.9 677.2,287.9 677.3,287.9 677.4,288.0 677.5,288.0 677.6,288.2 677.7,288.3 677.8,288.5 677.9,288.7 678.0,289.0 678.1,289.3 678.2,289.6 678.3,290.0 678.4,290.4 678.5,290.9 678.6,291.4 678.7,292.0 678.8,292.7 678.9,293.4 679.0,294.2 679.1,295.0 679.2,296.0 679.4,297.0 679.5,298.2 679.6,299.6 679.7,301.1 679.8,302.9 679.9,305.0 680.0,307.5 680.1,310.6 680.2,313.5 680.3,313.5 680.4,313.5 680.5,313.5 680.6,313.5 680.7,313.5 680.8,312.6 680.9,309.0 681.0,306.2 681.1,303.9 681.2,302.0 681.3,300.4 681.4,298.9 681.5,297.6 681.6,296.5 681.7,295.5 681.8,294.6 681.9,293.8 682.0,293.0 682.1,292.3 682.2,291.7 682.3,291.2 682.4,290.7 682.5,290.2 682.6,289.8 682.7,289.4 682.8,289.1 682.9,288.8 683.0,288.6 683.1,288.4 683.2,288.2 683.3,288.1 683.4,288.0 683.5,287.9 683.6,287.9 683.7,287.9 683.8,287.9 683.9,288.0 684.0,288.1 684.1,288.2 684.2,288.4 684.4,288.6 684.5,288.8 684.6,289.1 684.7,289.4 684.8,289.7 684.9,290.1 685.0,290.6 685.1,291.1 685.2,291.6 685.3,292.2 685.4,292.9 685.5,293.6 685.6,294.4 685.7,295.3 685.8,296.3 685.9,297.4 686.0,298.7 686.1,300.1 686.2,301.7 686.3,303.5 686.4,305.7 686.5,308.4 686.6,311.8 686.7,313.5 686.8,313.5 686.9,313.5 687.0,313.5 687.1,313.5 687.2,313.5 687.3,311.3 687.4,308.0 687.5,305.4 687.6,303.3 687.7,301.4 687.8,299.9 687.9,298.5 688.0,297.2 688.1,296.2 688.2,295.2 688.3,294.3 688.4,293.5 688.5,292.8 688.6,292.1 688.7,291.5 688.8,291.0 688.9,290.5 689.0,290.1 689.1,289.7 689.3,289.3 689.4,289.0 689.5,288.7 689.6,288.5 689.7,288.3 689.8,288.1 689.9,288.0 690.0,287.9 690.1,287.9 690.2,287.8 690.3,287.9 690.4,287.9 690.5,288.0 690.6,288.1 690.7,288.2 690.8,288.4 690.9,288.6 691.0,288.8 691.1,289.1 691.2,289.4 691.3,289.8 691.4,290.2 691.5,290.7 691.6,291.2 691.7,291.7 691.8,292.3 691.9,293.0 692.0,293.8 692.1,294.6 692.2,295.5 692.3,296.6 692.4,297.7 692.5,299.0 692.6,300.4 692.7,302.1 692.8,304.0 692.9,306.4 693.0,309.2 693.1,312.8 693.2,313.5 693.3,313.5 693.4,313.5 693.5,313.5 693.6,313.5 693.7,313.5 693.8,310.5 693.9,307.4 694.0,304.9 694.1,302.8 694.3,301.0 694.4,299.5 694.5,298.2 694.6,297.0 694.7,295.9 694.8,295.0 694.9,294.1 695.0,293.3 695.1,292.6 695.2,292.0 695.3,291.4 695.4,290.9 695.5,290.4 695.6,290.0 695.7,289.6 695.8,289.3 695.9,289.0 696.0,288.7 696.1,288.5 696.2,288.3 696.3,288.2 696.4,288.0 696.5,288.0 696.6,287.9" fill="none" stroke="#0000ff" stroke-width="1"/>
<path d="M345 299h2V313.5h-2zM347 299h2V313.5h-2zM350 299h2V313.5h-2zM355 299h2V313.5h-2zM360 299h2V313.5h-2zM365 299h2V313.5h-2zM371 299h2V313.5h-2zM377 299h2V313.5h-2zM383 299h2V313.5h-2zM389 299h2V313.5h-2zM395 299h2V313.5h-2zM402 299h2V313.5h-2zM408 299h2V313.5h-2zM414 299h2V313.5h-2zM421 299h2V313.5h-2zM427 299h2V313.5h-2zM433 299h2V313.5h-2zM440 299h2V313.5h-2zM446 299h2V313.5h-2zM453 299h2V313.5h-2zM459 299h2V313.5h-2zM465 299h2V313.5h-2zM472 299h2V313.5h-2zM478 299h2V313.5h-2zM485 299h2V313.5h-2zM491 299h2V313.5h-2zM498 299h2V313.5h-2zM504 299h2V313.5h-2zM511 299h2V313.5h-2zM517 299h2V313.5h-2zM524 299h2V313.5h-2zM530 299h2V313.5h-2zM537 299h2V313.5h-2zM543 299h2V313.5h-2zM550 299h2V313.5h-2zM556 299h2V313.5h-2zM563 299h2V313.5h-2zM569 299h2V313.5h-2zM576 299h2V313.5h-2zM582 299h2V313.5h-2zM588 299h2V313.5h-2zM595 299h2V313.5h-2zM601 299h2V313.5h-2zM608 299h2V313.5h-2zM614 299h2V313.5h-2zM621 299h2V313.5h-2zM627 299h2V313.5h-2zM634 299h2V313.5h-2zM640 299h2V313.5h-2zM647 299h2V313.5h-2zM653 299h2V313.5h-2zM660 299h2V313.5h-2zM666 299h2V313.5h-2zM673 299h2V313.5h-2zM679 299h2V313.5h-2zM686 299h2V313.5h-2zM692 299h2V313.5h-2z" fill="#0000ff"/>
<rect x="279.5" y="144.5" width="418.0" height="169.0" fill="none" stroke="#000" stroke-width="1"/>
<line x1="279.5" y1="313.5" x2="279.5" y2="309.5" stroke="#000"/>
<line x1="279.5" y1="144.5" x2="279.5" y2="148.5" stroke="#000"/>
<line x1="345.5" y1="313.5" x2="345.5" y2="309.5" stroke="#000"/>
<line x1="345.5" y1="144.5" x2="345.5" y2="148.5" stroke="#000"/>
<line x1="412.5" y1="313.5" x2="412.5" y2="309.5" stroke="#000"/>
<line x1="412.5" y1="144.5" x2="412.5" y2="148.5" stroke="#000"/>
<line x1="479.5" y1="313.5" x2="479.5" y2="309.5" stroke="#000"/>
<line x1="479.5" y1="144.5" x2="479.5" y2="148.5" stroke="#000"/>
<line x1="546.5" y1="313.5" x2="546.5" y2="309.5" stroke="#000"/>
<line x1="546.5" y1="144.5" x2="546.5" y2="148.5" stroke="#000"/>
<line x1="613.5" y1="313.5" x2="613.5" y2="309.5" stroke="#000"/>
<line x1="613.5" y1="144.5" x2="613.5" y2="148.5" stroke="#000"/>
<line x1="680.5" y1="313.5" x2="680.5" y2="309.5" stroke="#000"/>
<line x1="680.5" y1="144.5" x2="680.5" y2="148.5" stroke="#000"/>
<line x1="279.5" y1="151.5" x2="283.5" y2="151.5" stroke="#000"/>
<line x1="697.5" y1="151.5" x2="693.5" y2="151.5" stroke="#000"/>
<line x1="279.5" y1="182.5" x2="283.5" y2="182.5" stroke="#000"/>
<line x1="697.5" y1="182.5" x2="693.5" y2="182.5" stroke="#000"/>
<line x1="279.5" y1="213.5" x2="283.5" y2="213.5" stroke="#000"/>
<line x1="697.5" y1="213.5" x2="693.5" y2="213.5" stroke="#000"/>
<line x1="279.5" y1="244.5" x2="283.5" y2="244.5" stroke="#000"/>
<line x1="697.5" y1="244.5" x2="693.5" y2="244.5" stroke="#000"/>
<line x1="279.5" y1="275.5" x2="283.5" y2="275.5" stroke="#000"/>
<line x1="697.5" y1="275.5" x2="693.5" y2="275.5" stroke="#000"/>
<line x1="279.5" y1="306.5" x2="283.5" y2="306.5" stroke="#000"/>
<line x1="697.5" y1="306.5" x2="693.5" y2="306.5" stroke="#000"/>
<g font-family="Liberation Sans, sans-serif" font-size="13" fill="#000" shape-rendering="auto">
<text x="278.7" y="328.7" text-anchor="middle">0</text>
<text x="345.6" y="328.7" text-anchor="middle">20</text>
<text x="412.5" y="328.7" text-anchor="middle">40</text>
<text x="479.3" y="328.7" text-anchor="middle">60</text>
<text x="546.2" y="328.7" text-anchor="middle">80</text>
<text x="613.1" y="328.7" text-anchor="middle">100</text>
<text x="680.0" y="328.7" text-anchor="middle">120</text>
<text x="274.6" y="156.1" text-anchor="end">0</text>
<text x="274.6" y="187.1" text-anchor="end">-20</text>
<text x="274.6" y="218.1" text-anchor="end">-40</text>
<text x="274.6" y="249.1" text-anchor="end">-60</text>
<text x="274.6" y="280.1" text-anchor="end">-80</text>
<text x="274.6" y="311.1" text-anchor="end">-100</text>
<text x="487.2" y="346" text-anchor="middle">Frequency (MHz)</text>
<text transform="translate(238,229.3) rotate(-90)" text-anchor="middle">Magnitude (dB)</text>
</g></svg>
<div style="left:41px;top:372px;width:733px;height:1px;background:#000;"></div>
<div style="left:41px;top:372px;width:1px;height:249px;background:#000;"></div>
<div style="left:42px;top:373px;width:732px;height:1px;background:#fff;"></div>
<div style="left:42px;top:373px;width:1px;height:248px;background:#fff;"></div>
<div style="left:773px;top:373px;width:1px;height:248px;background:#fff;"></div>
<div style="left:46px;top:385px;width:172px;height:203px;border:1px solid #000;box-shadow:inset 1px 1px 0 #fff, inset -1px -1px 0 #fff;"></div>
<div style="left:56.5px;top:383px;width:78.8px;height:5px;background:#f0f0f0;"></div>
<span style="left:59.5px;top:377.97px;font-size:10.67px;line-height:10.67px;color:#000;letter-spacing:0.095px;font-family:'Liberation Sans', sans-serif;">Response Type</span>
<div style="left:47px;top:514px;width:172px;height:1px;background:#000;"></div>
<div style="left:47px;top:515px;width:172px;height:1px;background:#fff;"></div>
<div style="left:56px;top:511px;width:75.5px;height:6px;background:#f0f0f0;"></div>
<span style="left:59.5px;top:507.27px;font-size:10.67px;line-height:10.67px;color:#000;letter-spacing:-0.091px;font-family:'Liberation Sans', sans-serif;">Design Method</span>
<svg style="position:absolute;left:55px;top:393px" width="20" height="20"><circle cx="10" cy="10" r="7.5" fill="#fff" stroke="#333" stroke-width="1.1"/><circle cx="10" cy="10" r="5" fill="#333"/></svg>
<div style="left:78px;top:394px;width:130px;height:21px;border:1px solid #a6a6ae;background:#fff;"></div>
<div style="left:194px;top:395px;width:15px;height:21px;background:#e3e3e3;"><svg width="15" height="21" style="position:absolute;left:0;top:0"><polyline points="3.0,8.0 7.5,12.5 12.0,8.0" fill="none" stroke="#444" stroke-width="1"/></svg></div>
<span style="left:81.0px;top:399.77px;font-size:10.67px;line-height:10.67px;color:#000;letter-spacing:0.420px;font-family:'Liberation Sans', sans-serif;">Lowpass</span>
<svg style="position:absolute;left:55px;top:415px" width="20" height="20"><circle cx="10" cy="10" r="7.5" fill="#fff" stroke="#333" stroke-width="1.1"/></svg>
<div style="left:78px;top:416px;width:130px;height:21px;border:1px solid #a6a6ae;background:#fff;border-bottom:none;"></div>
<div style="left:194px;top:417px;width:15px;height:21px;background:#e3e3e3;"><svg width="15" height="21" style="position:absolute;left:0;top:0"><polyline points="3.0,8.0 7.5,12.5 12.0,8.0" fill="none" stroke="#444" stroke-width="1"/></svg></div>
<span style="left:81.0px;top:421.77px;font-size:10.67px;line-height:10.67px;color:#000;letter-spacing:0.008px;font-family:'Liberation Sans', sans-serif;">Highpass</span>
<svg style="position:absolute;left:55px;top:437px" width="20" height="20"><circle cx="10" cy="10" r="7.5" fill="#fff" stroke="#333" stroke-width="1.1"/></svg>
<span style="left:77.0px;top:441.77px;font-size:10.67px;line-height:10.67px;color:#000;letter-spacing:0.199px;font-family:'Liberation Sans', sans-serif;">Bandpass</span>
<svg style="position:absolute;left:55px;top:459px" width="20" height="20"><circle cx="10" cy="10" r="7.5" fill="#fff" stroke="#333" stroke-width="1.1"/></svg>
<span style="left:77.0px;top:463.77px;font-size:10.67px;line-height:10.67px;color:#000;letter-spacing:0.121px;font-family:'Liberation Sans', sans-serif;">Bandstop</span>
<svg style="position:absolute;left:55px;top:481px" width="20" height="20"><circle cx="10" cy="10" r="7.5" fill="#fff" stroke="#333" stroke-width="1.1"/></svg>
<div style="left:78px;top:482px;width:130px;height:21px;border:1px solid #a6a6ae;background:#fff;"></div>
<div style="left:194px;top:483px;width:15px;height:21px;background:#e3e3e3;"><svg width="15" height="21" style="position:absolute;left:0;top:0"><polyline points="3.0,8.0 7.5,12.5 12.0,8.0" fill="none" stroke="#444" stroke-width="1"/></svg></div>
<span style="left:81.0px;top:487.77px;font-size:10.67px;line-height:10.67px;color:#000;letter-spacing:0.156px;font-family:'Liberation Sans', sans-serif;">Differentiator</span>
<svg style="position:absolute;left:55px;top:526px" width="20" height="20"><circle cx="10" cy="10" r="7.5" fill="#fff" stroke="#333" stroke-width="1.1"/></svg>
<span style="left:77.0px;top:530.77px;font-size:10.67px;line-height:10.67px;color:#000;letter-spacing:-0.700px;font-family:'Liberation Sans', sans-serif;">IIR</span>
<div style="left:97px;top:527px;width:111px;height:21px;border:1px solid #a6a6ae;background:#fff;"></div>
<div style="left:194px;top:528px;width:15px;height:21px;background:#e3e3e3;"><svg width="15" height="21" style="position:absolute;left:0;top:0"><polyline points="3.0,8.0 7.5,12.5 12.0,8.0" fill="none" stroke="#444" stroke-width="1"/></svg></div>
<span style="left:100.0px;top:532.77px;font-size:10.67px;line-height:10.67px;color:#000;letter-spacing:0.273px;font-family:'Liberation Sans', sans-serif;">Butterworth</span>
<svg style="position:absolute;left:55px;top:558px" width="20" height="20"><circle cx="10" cy="10" r="7.5" fill="#fff" stroke="#333" stroke-width="1.1"/><circle cx="10" cy="10" r="5" fill="#333"/></svg>
<span style="left:77.0px;top:562.77px;font-size:10.67px;line-height:10.67px;color:#000;letter-spacing:-0.700px;font-family:'Liberation Sans', sans-serif;">FIR</span>
<div style="left:97px;top:559px;width:111px;height:21px;border:1px solid #a6a6ae;background:#fff;"></div>
<div style="left:194px;top:560px;width:15px;height:21px;background:#e3e3e3;"><svg width="15" height="21" style="position:absolute;left:0;top:0"><polyline points="3.0,8.0 7.5,12.5 12.0,8.0" fill="none" stroke="#444" stroke-width="1"/></svg></div>
<span style="left:100.0px;top:565.27px;font-size:10.67px;line-height:10.67px;color:#000;letter-spacing:-0.141px;font-family:'Liberation Sans', sans-serif;">Equiripple</span>
<div style="left:224px;top:385px;width:176px;height:72px;border:1px solid #000;box-shadow:inset 1px 1px 0 #fff, inset -1px -1px 0 #fff;"></div>
<div style="left:234.5px;top:383px;width:57.2px;height:5px;background:#f0f0f0;"></div>
<span style="left:237.5px;top:377.97px;font-size:10.67px;line-height:10.67px;color:#000;letter-spacing:-0.033px;font-family:'Liberation Sans', sans-serif;">Filter Order</span>
<svg style="position:absolute;left:233px;top:396.7px" width="20" height="20"><circle cx="10" cy="10" r="7.5" fill="#fff" stroke="#333" stroke-width="1.1"/><circle cx="10" cy="10" r="5" fill="#333"/></svg>
<span style="left:255.5px;top:402.17px;font-size:10.67px;line-height:10.67px;color:#000;letter-spacing:0.168px;font-family:'Liberation Sans', sans-serif;">Specify order:</span>
<div style="left:328px;top:398px;width:38px;height:16px;border:1px solid #a9a9a9;background:#fff;"></div>
<span style="left:330.0px;top:402.27px;font-size:10.67px;line-height:10.67px;color:#000;letter-spacing:-0.094px;font-family:'Liberation Sans', sans-serif;">128</span>
<svg style="position:absolute;left:233px;top:428px" width="20" height="20"><circle cx="10" cy="10" r="7.5" fill="#fff" stroke="#333" stroke-width="1.1"/></svg>
<span style="left:255.5px;top:432.77px;font-size:10.67px;line-height:10.67px;color:#000;letter-spacing:-0.212px;font-family:'Liberation Sans', sans-serif;">Minimum order</span>
<div style="left:224px;top:472px;width:176px;height:116px;border:1px solid #000;box-shadow:inset 1px 1px 0 #fff, inset -1px -1px 0 #fff;"></div>
<div style="left:234.5px;top:470px;width:40.2px;height:5px;background:#f0f0f0;"></div>
<span style="left:237.5px;top:464.97px;font-size:10.67px;line-height:10.67px;color:#000;letter-spacing:-0.033px;font-family:'Liberation Sans', sans-serif;">Options</span>
<span style="left:235.5px;top:486.57px;font-size:10.67px;line-height:10.67px;color:#000;letter-spacing:0.036px;font-family:'Liberation Sans', sans-serif;">Density Factor:</span>
<div style="left:319px;top:482px;width:71px;height:16px;border:1px solid #a9a9a9;background:#fff;"></div>
<span style="left:321.0px;top:486.27px;font-size:10.67px;line-height:10.67px;color:#000;letter-spacing:-0.180px;font-family:'Liberation Sans', sans-serif;">16</span>
<div style="left:407px;top:385px;width:176px;height:203px;border:1px solid #000;box-shadow:inset 1px 1px 0 #fff, inset -1px -1px 0 #fff;"></div>
<div style="left:417.6px;top:383px;width:125.89999999999993px;height:5px;background:#f0f0f0;"></div>
<span style="left:420.6px;top:377.97px;font-size:10.67px;line-height:10.67px;color:#000;letter-spacing:0.131px;font-family:'Liberation Sans', sans-serif;">Frequency Specifications</span>
<span style="left:418.0px;top:399.97px;font-size:10.67px;line-height:10.67px;color:#000;letter-spacing:-0.142px;font-family:'Liberation Sans', sans-serif;">Units:</span>
<div style="left:453px;top:395px;width:113px;height:21px;border:1px solid #a6a6ae;background:#fff;"></div>
<div style="left:552px;top:396px;width:15px;height:21px;background:#e3e3e3;"><svg width="15" height="21" style="position:absolute;left:0;top:0"><polyline points="3.0,8.0 7.5,12.5 12.0,8.0" fill="none" stroke="#444" stroke-width="1"/></svg></div>
<span style="left:456.5px;top:401.47px;font-size:10.67px;line-height:10.67px;color:#000;letter-spacing:-0.469px;font-family:'Liberation Sans', sans-serif;">MHz</span>
<span style="left:428.3px;top:430.27px;font-size:10.67px;line-height:10.67px;color:#000;letter-spacing:-0.071px;font-family:'Liberation Sans', sans-serif;">Fs:</span>
<div style="left:459px;top:426px;width:107px;height:16px;border:1px solid #a9a9a9;background:#fff;"></div>
<span style="left:461.0px;top:430.37px;font-size:10.67px;line-height:10.67px;color:#000;letter-spacing:-0.094px;font-family:'Liberation Sans', sans-serif;">250</span>
<span style="left:428.3px;top:464.77px;font-size:10.67px;line-height:10.67px;color:#000;letter-spacing:0.086px;font-family:'Liberation Sans', sans-serif;">Fpass:</span>
<div style="left:476px;top:460px;width:90px;height:16px;border:1px solid #a9a9a9;background:#fff;"></div>
<span style="left:478.0px;top:464.37px;font-size:10.67px;line-height:10.67px;color:#000;letter-spacing:-0.030px;font-family:'Liberation Sans', sans-serif;">10</span>
<span style="left:428.3px;top:493.77px;font-size:10.67px;line-height:10.67px;color:#000;letter-spacing:-0.038px;font-family:'Liberation Sans', sans-serif;">Fstop:</span>
<div style="left:476px;top:489px;width:90px;height:16px;border:1px solid #a9a9a9;background:#fff;"></div>
<span style="left:478.0px;top:493.37px;font-size:10.67px;line-height:10.67px;color:#000;letter-spacing:-0.030px;font-family:'Liberation Sans', sans-serif;">20</span>
<div style="left:590px;top:385px;width:176px;height:203px;border:1px solid #000;box-shadow:inset 1px 1px 0 #fff, inset -1px -1px 0 #fff;"></div>
<div style="left:601px;top:383px;width:122.30000000000003px;height:5px;background:#f0f0f0;"></div>
<span style="left:604.0px;top:377.97px;font-size:10.67px;line-height:10.67px;color:#000;letter-spacing:0.005px;font-family:'Liberation Sans', sans-serif;">Magnitude Specifications</span>
<span style="left:611.0px;top:408.97px;font-size:10.67px;line-height:10.67px;color:#000;letter-spacing:0.169px;font-family:'Liberation Sans', sans-serif;">Enter a weight value for</span>
<span style="left:611.0px;top:422.77px;font-size:10.67px;line-height:10.67px;color:#000;letter-spacing:0.222px;font-family:'Liberation Sans', sans-serif;">each band below.</span>
<span style="left:601.5px;top:448.27px;font-size:10.67px;line-height:10.67px;color:#000;letter-spacing:0.078px;font-family:'Liberation Sans', sans-serif;">Wpass:</span>
<div style="left:650px;top:443px;width:96px;height:16px;border:1px solid #a9a9a9;background:#fff;"></div>
<span style="left:652.5px;top:447.27px;font-size:10.67px;line-height:10.67px;color:#000;letter-spacing:-0.700px;font-family:'Liberation Sans', sans-serif;">1</span>
<span style="left:601.5px;top:476.37px;font-size:10.67px;line-height:10.67px;color:#000;letter-spacing:0.055px;font-family:'Liberation Sans', sans-serif;">Wstop:</span>
<div style="left:650px;top:471px;width:96px;height:16px;border:1px solid #a9a9a9;background:#fff;"></div>
<span style="left:652.5px;top:475.37px;font-size:10.67px;line-height:10.67px;color:#000;letter-spacing:-0.700px;font-family:'Liberation Sans', sans-serif;">1</span>
<span style="left:61.0px;top:602.27px;font-size:10.67px;line-height:10.67px;color:#000;letter-spacing:0.073px;font-family:'Liberation Sans', sans-serif;">Input processing:</span>
<div style="left:205px;top:595px;width:303px;height:21px;border:1px solid #a6a6ae;background:#fff;"></div>
<div style="left:494px;top:596px;width:15px;height:21px;background:#e3e3e3;"><svg width="15" height="21" style="position:absolute;left:0;top:0"><polyline points="3.0,8.0 7.5,12.5 12.0,8.0" fill="none" stroke="#444" stroke-width="1"/></svg></div>
<span style="left:207.8px;top:601.17px;font-size:10.67px;line-height:10.67px;color:#000;letter-spacing:0.141px;font-family:'Liberation Sans', sans-serif;">Inherited (this choice will be removed - see release notes)</span>
<div style="left:576px;top:596px;width:79px;height:16px;border:1px solid #bfbfbf;background:#cccccc;"></div>
<span style="left:586.0px;top:599.97px;font-size:10.67px;line-height:10.67px;color:#8c8c8c;letter-spacing:0.091px;font-family:'Liberation Sans', sans-serif;">Design Filter</span>
<div style="left:10px;top:622px;width:763px;height:19px;border:1px solid #a9adb3;background:#f0f0f0;box-shadow:inset 1px 1px 0 #e4e4e4;"></div>
<span style="left:12.5px;top:625.44px;font-size:13.3px;line-height:13.3px;color:#000;letter-spacing:-0.142px;font-family:'Liberation Sans', sans-serif;">Designing Filter ... Done</span>
<svg style="position:absolute;left:590px;top:594px" width="44" height="34" viewBox="590 594 44 34">
<g fill="#fff" stroke="#bdbdbd" stroke-width="0.800">
<ellipse cx="606.500" cy="607" rx="10.500" ry="8.800"/>
<path d="M600.500 613.500L598.500 618L604 615.500Z" stroke="none"/>
<ellipse cx="617.500" cy="614" rx="9" ry="7.500"/>
<path d="M621 620L624 623.500L618.500 621.300Z" stroke="none"/>
</g>
<g fill="#c8c8c8">
<circle cx="603" cy="604.500" r="1.300"/><circle cx="610" cy="604.500" r="1.300"/>
<circle cx="614.500" cy="612" r="1.100"/><circle cx="620.500" cy="612" r="1.100"/>
</g>
</svg>
<span style="left:633.5px;top:600px;font-size:20px;line-height:22px;color:#fff;font-family:'Liberation Sans','Noto Sans CJK SC',sans-serif;text-shadow:1px 1px 0 #666, 1px 1px 1.5px #555, 0 0 1px #999;letter-spacing:-1.4px"><span style="position:static;font-size:19px;letter-spacing:-1.5px">FPGA</span><span style="position:static;padding-left:0.5px;letter-spacing:-1px">技术江湖</span></span>

</div></body></html>
